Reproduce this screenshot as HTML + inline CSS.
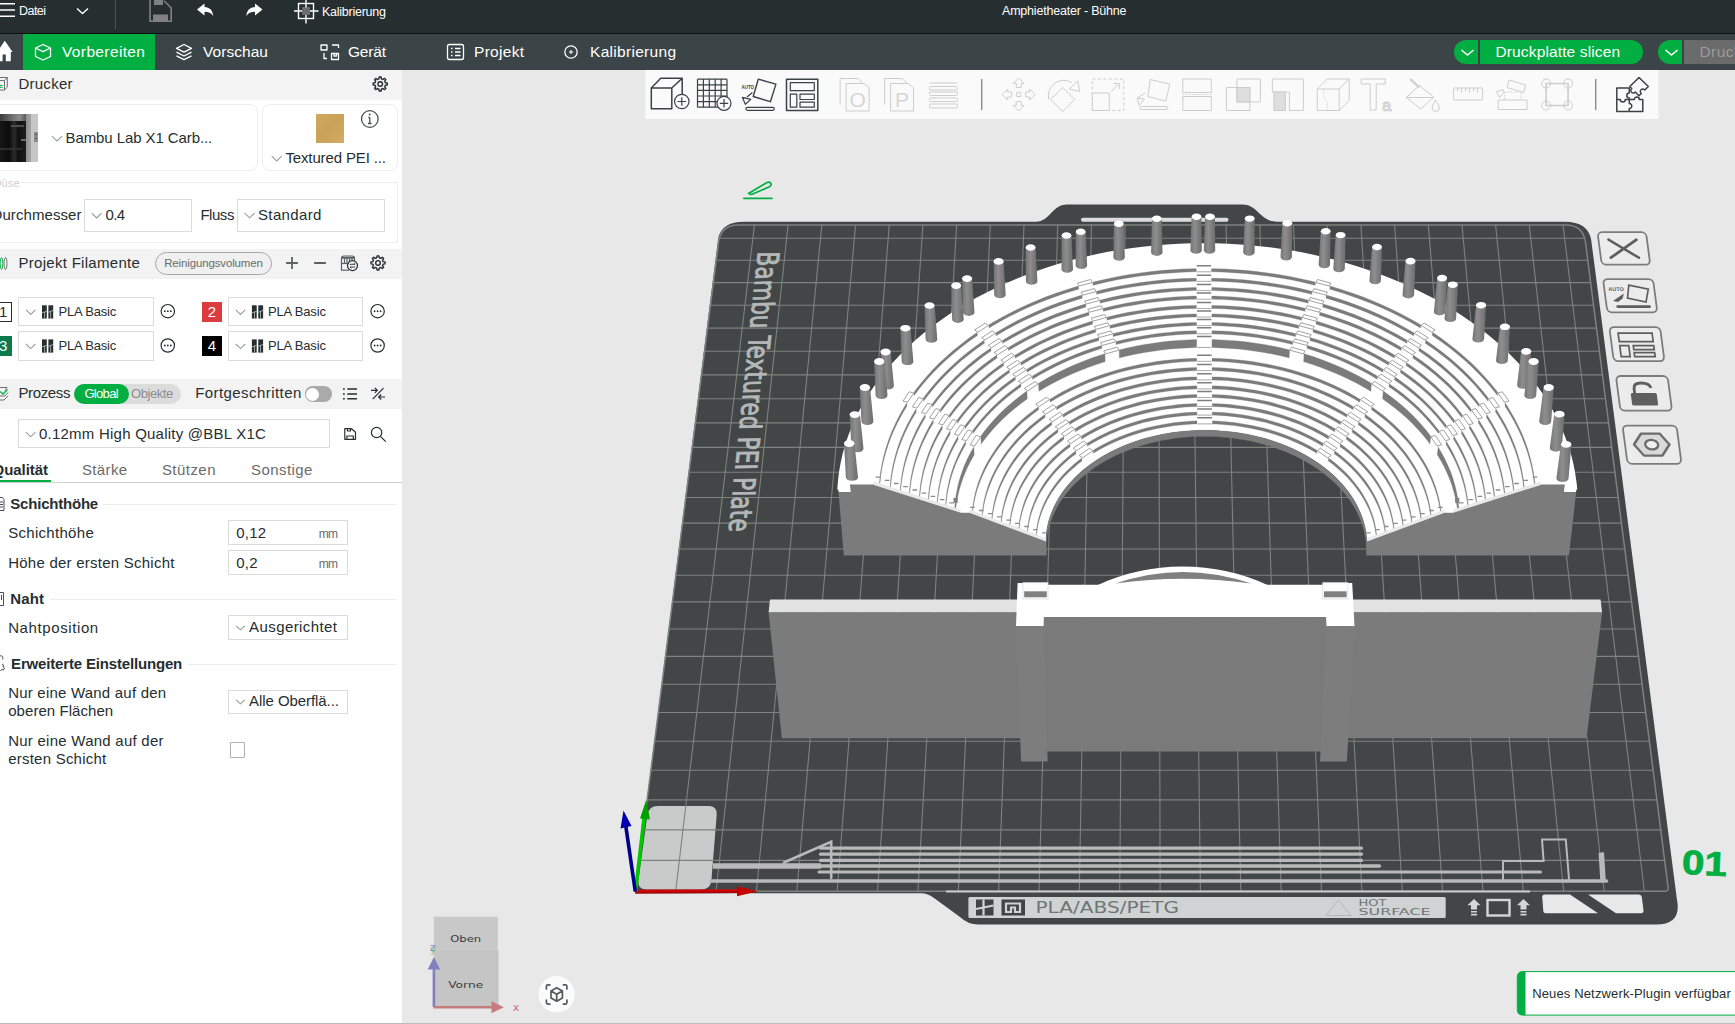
<!DOCTYPE html>
<html lang="de"><head><meta charset="utf-8"><title>Amphietheater - Bühne</title>
<style>
*{box-sizing:border-box;margin:0;padding:0}
html,body{width:1735px;height:1024px;overflow:hidden;background:#e8e8e8;font-family:"Liberation Sans","DejaVu Sans",sans-serif;color:#262e30}
.abs{position:absolute}
#title{position:absolute;left:0;top:0;width:1735px;height:33px;background:#262e30}
#tline{position:absolute;left:0;top:33px;width:1735px;height:1px;background:#0d0f10}
#tabs{position:absolute;left:0;top:34px;width:1735px;height:36px;background:#3b4446;overflow:hidden}
#left{position:absolute;left:0;top:0;width:402px;height:1023px;background:#fff;overflow:hidden}
#bot{position:absolute;left:0;top:1023px;width:1735px;height:1px;background:#bdbdbd}
#vp{position:absolute;left:0;top:0}
.t{position:absolute;white-space:nowrap;line-height:1}
</style></head><body>
<div id="left">
<div class="abs" style="left:0.0px;top:70.0px;width:402.0px;height:30.0px;background:#f3f3f3;"></div>
<div class="abs" style="left:0.0px;top:249.0px;width:402.0px;height:29.6px;background:#f3f3f3;"></div>
<div class="abs" style="left:0.0px;top:379.2px;width:402.0px;height:29.6px;background:#f3f3f3;"></div>
<span class="t" style="left:18.4px;top:76.0px;font-size:15px;color:#262e30;letter-spacing:0.27px;">Drucker</span>
<div class="abs" style="left:-10.0px;top:104.4px;width:267.6px;height:66.6px;border:1px solid #eeeeee;border-radius:8px;"></div>
<div class="abs" style="left:262.3px;top:104.4px;width:135.4px;height:66.6px;border:1px solid #eeeeee;border-radius:8px;"></div>
<div class="abs" style="left:0.0px;top:114.0px;width:38.0px;height:48.0px;background:#c6c6c6;"></div>
<div class="abs" style="left:25.5px;top:114.0px;width:5.5px;height:48.0px;background:linear-gradient(90deg,#8e8e8e,#a6a6a6);"></div>
<div class="abs" style="left:0.0px;top:114.0px;width:25.7px;height:48.0px;background:linear-gradient(90deg,#161616 0,#0b0b0b 35%,#2c2c2c 55%,#101010 70%,#1d1d1d 100%);"></div>
<div class="abs" style="left:0.0px;top:114.0px;width:25.7px;height:6.5px;background:linear-gradient(90deg,#3c3c3c,#6e6e6e 45%,#8c8c8c 75%,#5a5a5a);"></div>
<div class="abs" style="left:11.0px;top:124.5px;width:13.0px;height:2.5px;background:#4e4e4e;"></div>
<div class="abs" style="left:0.0px;top:148.0px;width:22.0px;height:2.0px;background:#2e2e2e;"></div>
<div class="abs" style="left:20.5px;top:138.5px;width:5.5px;height:2.5px;background:#6a6a6a;"></div>
<div class="abs" style="left:34.0px;top:131.5px;width:3.6px;height:10.5px;background:#8d8d8d;"></div>
<div class="abs" style="left:34.6px;top:133.5px;width:2.4px;height:1.5px;background:#555;"></div>
<div class="abs" style="left:34.6px;top:137.5px;width:2.4px;height:1.5px;background:#555;"></div>
<span class="t" style="left:65.5px;top:130.0px;font-size:15px;color:#262e30;letter-spacing:-0.09px;">Bambu Lab X1 Carb...</span>
<div class="abs" style="left:316.2px;top:114.0px;width:27.6px;height:28.7px;background:linear-gradient(135deg,#cfa95f,#c9a258 50%,#d3ad66);"></div>
<span class="t" style="left:285.4px;top:150.0px;font-size:15px;color:#262e30;letter-spacing:-0.13px;">Textured PEI ...</span>
<div class="abs" style="left:-10.0px;top:182.4px;width:407.7px;height:60.7px;border:1px solid #eeeeee;"></div>
<div class="abs" style="left:0.0px;top:176.0px;width:21.0px;height:14.0px;background:#fff;"></div>
<span class="t" style="left:-6.5px;top:178.0px;font-size:11px;color:#cfcfcf;letter-spacing:0.11px;">Düse</span>
<span class="t" style="left:-8.5px;top:207.0px;font-size:15px;color:#262e30;letter-spacing:0.08px;">Durchmesser</span>
<div class="abs" style="left:84.4px;top:199.4px;width:107.2px;height:32.4px;background:#fff;border:1px solid #dbdbdb;"></div>
<span class="t" style="left:105.4px;top:207.0px;font-size:15px;color:#262e30;letter-spacing:-0.53px;">0.4</span>
<span class="t" style="left:200.4px;top:207.0px;font-size:15px;color:#262e30;letter-spacing:-0.46px;">Fluss</span>
<div class="abs" style="left:237.2px;top:199.4px;width:147.5px;height:32.4px;background:#fff;border:1px solid #dbdbdb;"></div>
<span class="t" style="left:258.0px;top:207.0px;font-size:15px;color:#262e30;letter-spacing:0.36px;">Standard</span>
<span class="t" style="left:18.4px;top:255.0px;font-size:15px;color:#262e30;letter-spacing:0.30px;">Projekt Filamente</span>
<div class="abs" style="left:155.2px;top:252.1px;width:116.5px;height:22.5px;background:#f0f0f0;border:1px solid #a8a8a8;border-radius:11.5px;"></div>
<span class="t" style="left:164.2px;top:258.0px;font-size:11.5px;color:#6b6b6b;letter-spacing:-0.14px;">Reinigungsvolumen</span>
<div class="abs" style="left:-8.0px;top:302.4px;width:19.8px;height:19.4px;background:#fff;border:1px solid #262e30;"></div>
<span class="t" style="left:-0.9px;top:304.0px;font-size:15px;color:#262e30;">1</span>
<div class="abs" style="left:18.4px;top:297.2px;width:135.2px;height:29.3px;background:#fff;border:1px solid #dbdbdb;"></div>
<span class="t" style="left:58.4px;top:305.0px;font-size:13px;color:#262e30;letter-spacing:-0.17px;">PLA Basic</span>
<div class="abs" style="left:202.0px;top:302.4px;width:19.9px;height:19.4px;background:#dc3c40;"></div>
<span class="t" style="left:207.8px;top:304.0px;font-size:15px;color:#fff;">2</span>
<div class="abs" style="left:228.0px;top:297.2px;width:135.4px;height:29.3px;background:#fff;border:1px solid #dbdbdb;"></div>
<span class="t" style="left:268.0px;top:305.0px;font-size:13px;color:#262e30;letter-spacing:-0.17px;">PLA Basic</span>
<div class="abs" style="left:-8.0px;top:336.2px;width:19.8px;height:19.4px;background:#0e7a4c;"></div>
<span class="t" style="left:-0.9px;top:338.0px;font-size:15px;color:#fff;">3</span>
<div class="abs" style="left:18.4px;top:331.3px;width:135.2px;height:29.3px;background:#fff;border:1px solid #dbdbdb;"></div>
<span class="t" style="left:58.4px;top:339.0px;font-size:13px;color:#262e30;letter-spacing:-0.17px;">PLA Basic</span>
<div class="abs" style="left:202.0px;top:336.2px;width:19.9px;height:19.4px;background:#000;"></div>
<span class="t" style="left:207.8px;top:338.0px;font-size:15px;color:#fff;">4</span>
<div class="abs" style="left:228.0px;top:331.3px;width:135.4px;height:29.3px;background:#fff;border:1px solid #dbdbdb;"></div>
<span class="t" style="left:268.0px;top:339.0px;font-size:13px;color:#262e30;letter-spacing:-0.17px;">PLA Basic</span>
<span class="t" style="left:18.4px;top:385.0px;font-size:15px;color:#262e30;letter-spacing:-0.36px;">Prozess</span>
<div class="abs" style="left:74.0px;top:383.5px;width:106.8px;height:20.5px;background:#dcdcdc;border-radius:10.3px;"></div>
<div class="abs" style="left:74.0px;top:383.5px;width:54.8px;height:20.5px;background:#00ae42;border-radius:10.3px;"></div>
<span class="t" style="left:84.4px;top:387.0px;font-size:13px;color:#fff;letter-spacing:-0.68px;">Global</span>
<span class="t" style="left:131.1px;top:387.0px;font-size:13px;color:#8c8c8c;letter-spacing:-0.45px;">Objekte</span>
<span class="t" style="left:195.2px;top:385.0px;font-size:15px;color:#262e30;letter-spacing:0.43px;">Fortgeschritten</span>
<div class="abs" style="left:304.8px;top:386.3px;width:27.2px;height:15.4px;background:#aaaaaa;border-radius:7.7px;"></div>
<div class="abs" style="left:306px;top:387.5px;width:13px;height:13px;border-radius:7px;background:#fff"></div>
<div class="abs" style="left:18.4px;top:419.4px;width:311.2px;height:29.1px;background:#fff;border:1px solid #dbdbdb;"></div>
<span class="t" style="left:39.0px;top:426.0px;font-size:15px;color:#262e30;letter-spacing:0.23px;">0.12mm High Quality @BBL X1C</span>
<span class="t" style="left:-7.4px;top:462.0px;font-size:15px;color:#262e30;letter-spacing:-0.06px;font-weight:bold;">Qualität</span>
<div class="abs" style="left:0.0px;top:480.3px;width:50.8px;height:1.7px;background:#00ae42;"></div>
<div class="abs" style="left:0.0px;top:482.0px;width:402.0px;height:1.0px;background:#cfcfcf;"></div>
<span class="t" style="left:82.0px;top:462.0px;font-size:15px;color:#6b6b6b;letter-spacing:0.35px;">Stärke</span>
<span class="t" style="left:161.9px;top:462.0px;font-size:15px;color:#6b6b6b;letter-spacing:0.46px;">Stützen</span>
<span class="t" style="left:251.0px;top:462.0px;font-size:15px;color:#6b6b6b;letter-spacing:0.43px;">Sonstige</span>
<span class="t" style="left:10.3px;top:496.0px;font-size:15px;color:#262e30;letter-spacing:-0.21px;font-weight:bold;">Schichthöhe</span>
<div class="abs" style="left:102.6px;top:503.6px;width:293.1px;height:1.0px;background:#ececec;"></div>
<span class="t" style="left:10.3px;top:591.0px;font-size:15px;color:#262e30;letter-spacing:0.12px;font-weight:bold;">Naht</span>
<div class="abs" style="left:49.8px;top:598.8px;width:345.9px;height:1.0px;background:#ececec;"></div>
<span class="t" style="left:11.1px;top:656.0px;font-size:15px;color:#262e30;letter-spacing:-0.17px;font-weight:bold;">Erweiterte Einstellungen</span>
<div class="abs" style="left:187.6px;top:664.0px;width:208.1px;height:1.0px;background:#ececec;"></div>
<span class="t" style="left:8.2px;top:525.0px;font-size:15px;color:#262e30;letter-spacing:0.30px;">Schichthöhe</span>
<div class="abs" style="left:228.0px;top:520.4px;width:119.9px;height:24.4px;background:#fff;border:1px solid #dbdbdb;"></div>
<span class="t" style="left:236.2px;top:525.0px;font-size:15px;color:#262e30;letter-spacing:0.24px;">0,12</span>
<span class="t" style="left:318.7px;top:528.0px;font-size:12px;color:#6b6b6b;letter-spacing:-0.79px;">mm</span>
<span class="t" style="left:8.2px;top:555.0px;font-size:15px;color:#262e30;letter-spacing:0.24px;">Höhe der ersten Schicht</span>
<div class="abs" style="left:228.0px;top:550.3px;width:119.9px;height:24.4px;background:#fff;border:1px solid #dbdbdb;"></div>
<span class="t" style="left:236.2px;top:555.0px;font-size:15px;color:#262e30;letter-spacing:0.22px;">0,2</span>
<span class="t" style="left:318.7px;top:558.0px;font-size:12px;color:#6b6b6b;letter-spacing:-0.79px;">mm</span>
<span class="t" style="left:8.2px;top:620.0px;font-size:15px;color:#262e30;letter-spacing:0.60px;">Nahtposition</span>
<div class="abs" style="left:228.0px;top:615.4px;width:119.9px;height:24.3px;background:#fff;border:1px solid #dbdbdb;"></div>
<span class="t" style="left:249.1px;top:619.0px;font-size:15px;color:#262e30;letter-spacing:0.41px;">Ausgerichtet</span>
<span class="t" style="left:8.2px;top:685.0px;font-size:15px;color:#262e30;letter-spacing:0.21px;">Nur eine Wand auf den</span>
<span class="t" style="left:8.2px;top:703.0px;font-size:15px;color:#262e30;letter-spacing:0.06px;">oberen Flächen</span>
<div class="abs" style="left:228.0px;top:689.6px;width:119.9px;height:24.0px;background:#fff;border:1px solid #dbdbdb;"></div>
<span class="t" style="left:249.1px;top:693.0px;font-size:15px;color:#262e30;letter-spacing:-0.07px;">Alle Oberflä...</span>
<span class="t" style="left:8.2px;top:733.0px;font-size:15px;color:#262e30;letter-spacing:0.25px;">Nur eine Wand auf der</span>
<span class="t" style="left:8.2px;top:751.0px;font-size:15px;color:#262e30;letter-spacing:0.23px;">ersten Schicht</span>
<div class="abs" style="left:229.5px;top:742.3px;width:15.2px;height:15.3px;background:#fff;border:1px solid #b0b0b0;border-radius:1px;"></div>
<svg class="abs" style="left:0;top:0" width="402" height="1024" viewBox="0 0 402 1024"><path d="M378.96 78.85L379.25 76.96L381.15 76.96L381.44 78.85L382.97 79.48L384.51 78.36L385.84 79.69L384.72 81.23L385.35 82.76L387.24 83.05L387.24 84.95L385.35 85.24L384.72 86.77L385.84 88.31L384.51 89.64L382.97 88.52L381.44 89.15L381.15 91.04L379.25 91.04L378.96 89.15L377.43 88.52L375.89 89.64L374.56 88.31L375.68 86.77L375.05 85.24L373.16 84.95L373.16 83.05L375.05 82.76L375.68 81.23L374.56 79.69L375.89 78.36L377.43 79.48Z" fill="none" stroke="#262e30" stroke-width="1.4" stroke-linejoin="round"/><circle cx="380.2" cy="84" r="2.3" fill="none" stroke="#262e30" stroke-width="1.4"/><path d="M376.76 257.75L377.05 255.86L378.95 255.86L379.24 257.75L380.77 258.38L382.31 257.26L383.64 258.59L382.52 260.13L383.15 261.66L385.04 261.95L385.04 263.85L383.15 264.14L382.52 265.67L383.64 267.21L382.31 268.54L380.77 267.42L379.24 268.05L378.95 269.94L377.05 269.94L376.76 268.05L375.23 267.42L373.69 268.54L372.36 267.21L373.48 265.67L372.85 264.14L370.96 263.85L370.96 261.95L372.85 261.66L373.48 260.13L372.36 258.59L373.69 257.26L375.23 258.38Z" fill="none" stroke="#262e30" stroke-width="1.4" stroke-linejoin="round"/><circle cx="378" cy="262.9" r="2.3" fill="none" stroke="#262e30" stroke-width="1.4"/><circle cx="369.800" cy="119" r="8.300" fill="none" stroke="#4a5053" stroke-width="1.300"/><path d="M369.800 117.500V123.500M368.300 117.500H369.800M368 123.500H371.600" stroke="#4a5053" stroke-width="1.300" fill="none"/><circle cx="369.700" cy="114.600" r="1" fill="#4a5053"/><path d="M52.0 136.1L57.0 140.9L62.0 136.1" fill="none" stroke="#969b9d" stroke-width="1.05"/><path d="M271.7 156.1L276.7 160.9L281.7 156.1" fill="none" stroke="#969b9d" stroke-width="1.05"/><path d="M91.7 213.1L96.7 217.9L101.6 213.1" fill="none" stroke="#969b9d" stroke-width="1.05"/><path d="M244.6 213.1L249.6 217.9L254.7 213.1" fill="none" stroke="#969b9d" stroke-width="1.05"/><path d="M26.0 309.9L30.7 314.5L35.4 309.9" fill="none" stroke="#969b9d" stroke-width="1.05"/><path d="M235.8 309.9L240.5 314.5L245.2 309.9" fill="none" stroke="#969b9d" stroke-width="1.05"/><path d="M26.0 344.0L30.7 348.6L35.4 344.0" fill="none" stroke="#969b9d" stroke-width="1.05"/><path d="M235.8 344.0L240.5 348.6L245.2 344.0" fill="none" stroke="#969b9d" stroke-width="1.05"/><path d="M26.0 432.2L30.7 436.8L35.4 432.2" fill="none" stroke="#969b9d" stroke-width="1.05"/><path d="M236.2 625.8L240.4 629.8L244.7 625.8" fill="none" stroke="#969b9d" stroke-width="1.05"/><path d="M236.2 699.8L240.4 703.8L244.7 699.8" fill="none" stroke="#969b9d" stroke-width="1.05"/><circle cx="167.8" cy="311.2" r="6.700" fill="none" stroke="#262e30" stroke-width="1.200"/><circle cx="164.8" cy="311.2" r=".9" fill="#262e30"/><circle cx="167.8" cy="311.2" r=".9" fill="#262e30"/><circle cx="170.8" cy="311.2" r=".9" fill="#262e30"/><circle cx="377.6" cy="311.2" r="6.700" fill="none" stroke="#262e30" stroke-width="1.200"/><circle cx="374.6" cy="311.2" r=".9" fill="#262e30"/><circle cx="377.6" cy="311.2" r=".9" fill="#262e30"/><circle cx="380.6" cy="311.2" r=".9" fill="#262e30"/><circle cx="167.8" cy="345.5" r="6.700" fill="none" stroke="#262e30" stroke-width="1.200"/><circle cx="164.8" cy="345.5" r=".9" fill="#262e30"/><circle cx="167.8" cy="345.5" r=".9" fill="#262e30"/><circle cx="170.8" cy="345.5" r=".9" fill="#262e30"/><circle cx="377.6" cy="345.5" r="6.700" fill="none" stroke="#262e30" stroke-width="1.200"/><circle cx="374.6" cy="345.5" r=".9" fill="#262e30"/><circle cx="377.6" cy="345.5" r=".9" fill="#262e30"/><circle cx="380.6" cy="345.5" r=".9" fill="#262e30"/><rect x="42" y="305.3" width="4.800" height="13.200" fill="#262e30"/><rect x="48.4" y="305.3" width="4.800" height="13.200" fill="#262e30"/><path d="M42 312.8L46.8 311.3M48.4 312.3L53.2 310.3M44.6 311.8V318.3M50.6 311.3V318.3" stroke="#cfd2d3" stroke-width=".7" fill="none"/><rect x="251.9" y="305.3" width="4.800" height="13.200" fill="#262e30"/><rect x="258.3" y="305.3" width="4.800" height="13.200" fill="#262e30"/><path d="M251.9 312.8L256.7 311.3M258.3 312.3L263.1 310.3M254.5 311.8V318.3M260.5 311.3V318.3" stroke="#cfd2d3" stroke-width=".7" fill="none"/><rect x="42" y="339.4" width="4.800" height="13.200" fill="#262e30"/><rect x="48.4" y="339.4" width="4.800" height="13.200" fill="#262e30"/><path d="M42 346.9L46.8 345.4M48.4 346.4L53.2 344.4M44.6 345.9V352.4M50.6 345.4V352.4" stroke="#cfd2d3" stroke-width=".7" fill="none"/><rect x="251.9" y="339.4" width="4.800" height="13.200" fill="#262e30"/><rect x="258.3" y="339.4" width="4.800" height="13.200" fill="#262e30"/><path d="M251.9 346.9L256.7 345.4M258.3 346.4L263.1 344.4M254.5 345.9V352.4M260.5 345.4V352.4" stroke="#cfd2d3" stroke-width=".7" fill="none"/><path d="M286.100 263H297.900M292 257.100V268.900M314.100 263H325.900" stroke="#5b6366" stroke-width="1.800" fill="none"/><g fill="none" stroke="#5b6366" stroke-width="1.200"><path d="M341.500 270V258.500a2.500 2.500 0 0 1 2.500-2.500h8a2.500 2.500 0 0 1 2.500 2.500V262"/><path d="M341.500 263.500H349"/><path d="M344.500 258.500V263M347 258.500V263M349.500 258.500V262M352 258.500V261"/><path d="M341.500 257.800H354.500" stroke-width="2"/><path d="M341 270.200H349"/></g><circle cx="352.500" cy="265.600" r="5" fill="#f3f3f3" stroke="#262e30" stroke-width="1.200"/><path d="M349.700 264.300H355M353.700 263l1.400 1.300M355.300 267H350M351.400 268.300L350 267" stroke="#262e30" stroke-width=".9" fill="none"/><path d="M347.300 388.900H357M347.300 393.900H357M347.300 398.800H357" stroke="#262e30" stroke-width="1.500" fill="none"/><path d="M343 388.900h1.800M343 393.900h1.800M343 398.800h1.800" stroke="#262e30" stroke-width="1.500"/><path d="M372.700 399.200L383.500 388.200M371 390.300H377M374.800 387.800L377.300 390.300L374.800 392.800M385 397H379M381.200 394.500L378.700 397L381.200 399.500" stroke="#262e30" stroke-width="1.200" fill="none"/><path d="M344.800 428.700H351.500L355.500 432.300V439.300H344.800ZM347 439.300V436H353.300V439.300M347.500 428.700V431H350.500V428.700" stroke="#262e30" stroke-width="1.200" fill="none" stroke-linejoin="round"/><circle cx="376.600" cy="432.500" r="5.200" fill="none" stroke="#262e30" stroke-width="1.200"/><path d="M380.400 436.300L385.700 441.700" stroke="#262e30" stroke-width="1.200"/><g fill="none" stroke="#6b7173" stroke-width="1"><path d="M-3 80.500H4.500V90H-3M4.500 80.500L7.300 77.500V87.300L4.500 90M-3 77.500H7.300"/></g><path d="M-1 85.500H2.500M-1 87.300H2.500" stroke="#00ae42" stroke-width="1"/><ellipse cx="1.500" cy="263.500" rx="1.300" ry="5.800" fill="none" stroke="#00ae42" stroke-width="1"/><ellipse cx="5.500" cy="263.500" rx="1.500" ry="6" fill="none" stroke="#6b7173" stroke-width="1"/><g fill="none" stroke-width="1"><path d="M-2 387.500H7L5 390.500M-2 396L5 396L8 392.500M-2 400L4 400L8 396" stroke="#6b7173"/><path d="M0 391.500L3 394L7.500 389.500" stroke="#00ae42" stroke-width="1.300"/></g><g fill="none" stroke="#4a5053" stroke-width="1"><path d="M-1 497.500H2.500L4 499.500V510.500H-1M-1 502H3M-1 504.500H3M-1 507H3"/><path d="M-1 592.500H3.500V605.500H-1M1.500 595V600"/><path d="M-1 657.500a2 2 0 1 1 3 2M2 664l1.500 1-.5 2 1.500 1-1 2-2-.5-1 1.500" /></g></svg>
</div>
<svg id="vp" width="1735" height="1024" viewBox="0 0 1735 1024">
<path d="M744.4 221.7L1036 221.7 C1050 221.7 1052 204.5 1067 204.5 L1242.5 204.5 C1258 204.5 1260 221.7 1277 221.7L1564.9 221.7Q1587.9 221.7 1591.2 239.9L1677.0 899.9Q1681.7 924.5 1656.2 924.5L978 924.5 Q968 924.5 960 917 L934 898 Q928 893.3 921 893.3L635.1 893.3L718.2 238.5 Q721.4 221.7 744.4 221.7Z" fill="#424647"/>
<rect x="1081" y="217.800" width="147.500" height="4" rx="2" fill="#dcdcdc"/>
<path d="M638.4 880.5Q637.2 889.4 646.2 889.4L701.6 889.4Q710.6 889.4 711.4 880.5L716.7 814.8Q717.4 805.9 708.4 805.9L657.7 805.9Q648.7 805.9 647.4 814.8Z" fill="#c9cbcb"/>
<path d="M675.7 891.3L754.4 225.1M716.1 891.3L788.1 225.1M756.4 891.3L821.8 225.1M796.8 891.3L855.5 225.1M837.2 891.3L889.2 225.1M877.5 891.3L922.9 225.1M917.9 891.3L956.6 225.1M958.3 891.3L990.3 225.1M998.6 891.3L1024.0 225.1M1039.0 891.3L1057.7 225.1M1079.3 891.3L1091.4 225.1M1119.7 891.3L1125.0 225.1M1160.1 891.3L1158.7 225.1M1200.4 891.3L1192.4 225.1M1240.8 891.3L1226.1 225.1M1281.2 891.3L1259.8 225.1M1321.5 891.3L1293.5 225.1M1361.9 891.3L1327.2 225.1M1402.3 891.3L1360.9 225.1M1442.6 891.3L1394.6 225.1M1483.0 891.3L1428.3 225.1M1523.3 891.3L1462.0 225.1M1563.7 891.3L1495.6 225.1M1604.1 891.3L1529.3 225.1M1644.4 891.3L1563.0 225.1M639.3 860.4L1664.7 860.4M643.2 829.9L1660.8 829.9M647.1 799.9L1656.9 799.9M650.9 770.3L1653.1 770.3M654.6 741.2L1649.4 741.2M658.3 712.5L1645.7 712.5M661.9 684.3L1642.1 684.3M665.5 656.4L1638.5 656.4M669.0 629.0L1635.0 629.0M672.4 601.9L1631.6 601.9M675.9 575.3L1628.1 575.3M679.2 549.0L1624.8 549.0M682.6 523.1L1621.4 523.1M685.8 497.5L1618.2 497.5M689.1 472.3L1614.9 472.3M692.3 447.4L1611.7 447.4M695.4 422.9L1608.6 422.9M698.5 398.7L1605.5 398.7M701.6 374.9L1602.4 374.9M704.6 351.3L1599.4 351.3M707.6 328.1L1596.4 328.1M710.5 305.2L1593.5 305.2M713.4 282.6L1590.6 282.6M716.3 260.3L1587.7 260.3M719.1 238.2L1584.9 238.2" fill="none" stroke="#7d837f" stroke-width="1.100"/>
<path d="M635.9 887.3Q635.3 891.3 639.3 891.3L1664.7 891.3Q1668.7 891.3 1668.1 887.3L1585.5 242.5Q1583.2 225.1 1565.7 225.1L738.3 225.1Q720.8 225.1 718.5 242.5Z" fill="none" stroke="#7d837f" stroke-width="1.500"/>
<text transform="matrix(-0.1041 0.9946 -1 0.02 758.0 251.5)" x="0" y="0" font-family="DejaVu Sans, Liberation Sans, sans-serif" font-size="30" textLength="282" lengthAdjust="spacingAndGlyphs" fill="#b4b8b8" stroke="#b4b8b8" stroke-width=".9">Bambu Textured PEI Plate</text><g fill="none" stroke="#b9b9b9" stroke-linecap="round"><path d="M820.500 848.100H1361.500M820.500 854.200H1361.500M820.500 860.400H1361.500M820.500 866H1379.500" stroke-width="3.300"/><path d="M819 872H1540.500" stroke-width="3"/><path d="M711 881H1606.500" stroke-width="3.600"/><path d="M713 866H821" stroke-width="5.500" stroke-linecap="butt"/><path d="M784 862.500L831.200 841.800V878" stroke-width="2.600"/><path d="M1503 879V861H1543.600L1542 839.600H1565.800L1569 879" stroke-width="2"/><path d="M1601.300 852.500L1603 880" stroke-width="5.500" stroke-linecap="butt"/></g><path d="M946 891.500H1530" stroke="#c9cccc" stroke-width="1.800"/><rect x="968.400" y="897" width="477.300" height="21" rx="1.500" fill="#cfd3d4"/><g fill="#3f4547"><rect x="976" y="899.500" width="17.500" height="16"/><rect x="1001.500" y="899.500" width="23.500" height="16"/></g><path d="M983.500 899.500V915.500M976 909L993.500 905.500M1006 903.500h14v8.500h-5v-4.500h-4v4.500h-5z" stroke="#cfd3d4" stroke-width="2.200" fill="none"/><text x="1035.500" y="913" font-family="DejaVu Sans, Liberation Sans, sans-serif" font-size="15" textLength="143.500" lengthAdjust="spacingAndGlyphs" fill="#6f7575">PLA/ABS/PETG</text><path d="M1338.500 900L1351 915.500H1326Z" fill="none" stroke="#b3b8b9" stroke-width="1"/><text x="1358.500" y="906" font-family="DejaVu Sans, Liberation Sans, sans-serif" font-size="8.500" textLength="28" lengthAdjust="spacingAndGlyphs" fill="#6f7575">HOT</text><text x="1358.500" y="915.300" font-family="DejaVu Sans, Liberation Sans, sans-serif" font-size="8.500" textLength="72" lengthAdjust="spacingAndGlyphs" fill="#6f7575">SURFACE</text><path d="M1474 899l6.500 6.300h-3.500v4.200h-6v-4.200h-3.500zM1471 911h6v1.600h-6zM1471 913.800h6v1.600h-6z" fill="#d3d7d8"/><path d="M1523.5 899l6.500 6.300h-3.500v4.200h-6v-4.200h-3.500zM1520.5 911h6v1.600h-6zM1520.5 913.800h6v1.600h-6z" fill="#d3d7d8"/><rect x="1487.500" y="900" width="22" height="15.500" fill="none" stroke="#d3d7d8" stroke-width="2.400"/><path d="M1545 894.500H1570L1598 913.300H1546.500Q1543.500 913.300 1543.300 911L1542.200 897Q1542 894.500 1545 894.500ZM1588 894.500H1638.500Q1641.500 894.500 1641.800 897L1643.500 910.500Q1643.800 913.300 1641 913.300H1616Z" fill="#e8e8e8"/><text transform="matrix(1 0.05 -0.04 1 1681.500 873.800)" font-family="Liberation Sans, sans-serif" font-weight="bold" font-size="34" textLength="45" lengthAdjust="spacingAndGlyphs" fill="#00ae42" stroke="#00ae42" stroke-width=".7">01</text>
<path d="M1577.3 489.6L1576.3 480.5L1574.9 471.4L1573.1 462.4L1570.8 453.5L1568.0 444.6L1564.8 435.9L1561.2 427.2L1557.2 418.6L1552.8 410.2L1547.9 401.9L1542.7 393.7L1537.0 385.7L1531.0 377.8L1524.6 370.1L1517.9 362.6L1510.8 355.2L1503.4 348.1L1495.6 341.1L1487.5 334.3L1479.1 327.7L1470.5 321.4L1461.5 315.2L1452.2 309.3L1442.7 303.6L1433.0 298.1L1423.0 292.9L1412.8 287.9L1402.3 283.2L1391.7 278.7L1380.8 274.4L1369.8 270.4L1358.6 266.7L1347.3 263.3L1335.8 260.1L1324.2 257.2L1312.5 254.5L1300.6 252.1L1288.7 250.0L1276.7 248.2L1264.6 246.7L1252.4 245.4L1240.3 244.4L1228.0 243.7L1215.8 243.3L1203.5 243.2L1191.3 243.3L1179.1 243.7L1166.9 244.4L1154.7 245.4L1142.6 246.7L1130.5 248.2L1118.6 250.0L1106.7 252.1L1094.9 254.5L1083.3 257.2L1071.8 260.1L1060.4 263.3L1049.1 266.7L1038.1 270.4L1027.2 274.4L1016.5 278.7L1006.0 283.2L995.7 287.9L985.6 292.9L975.8 298.1L966.2 303.6L956.8 309.3L947.8 315.2L939.0 321.4L930.5 327.7L922.3 334.3L914.5 341.1L906.9 348.1L899.7 355.2L892.8 362.6L886.3 370.1L880.2 377.8L874.4 385.7L869.0 393.7L864.0 401.9L859.4 410.2L855.2 418.6L851.5 427.2L848.1 435.9L845.2 444.6L842.7 453.5L840.7 462.4L839.1 471.4L838.0 480.5L837.3 489.6L1046.0 547.0L1045.9 542.9L1045.9 538.8L1046.2 534.7L1046.7 530.6L1047.4 526.6L1048.3 522.5L1049.4 518.5L1050.8 514.6L1052.3 510.7L1054.0 506.8L1055.9 503.0L1058.0 499.2L1060.3 495.5L1062.8 491.8L1065.4 488.3L1068.3 484.8L1071.3 481.4L1074.4 478.0L1077.8 474.8L1081.3 471.6L1084.9 468.5L1088.8 465.6L1092.7 462.7L1096.8 459.9L1101.0 457.3L1105.4 454.7L1109.9 452.3L1114.5 450.0L1119.2 447.8L1124.0 445.7L1128.9 443.7L1133.9 441.9L1139.0 440.2L1144.2 438.6L1149.5 437.2L1154.8 435.9L1160.2 434.7L1165.6 433.7L1171.1 432.8L1176.6 432.0L1182.2 431.4L1187.8 430.9L1193.4 430.5L1199.1 430.3L1204.7 430.2L1210.4 430.3L1216.0 430.5L1221.6 430.9L1227.3 431.4L1232.8 432.0L1238.4 432.8L1243.9 433.7L1249.4 434.7L1254.8 435.9L1260.2 437.2L1265.5 438.6L1270.7 440.2L1275.9 441.9L1280.9 443.7L1285.9 445.7L1290.8 447.8L1295.6 450.0L1300.2 452.3L1304.8 454.7L1309.2 457.3L1313.5 459.9L1317.7 462.7L1321.7 465.6L1325.6 468.5L1329.4 471.6L1333.0 474.8L1336.4 478.0L1339.7 481.4L1342.8 484.8L1345.7 488.3L1348.5 491.8L1351.1 495.5L1353.5 499.2L1355.7 503.0L1357.7 506.8L1359.5 510.7L1361.2 514.6L1362.6 518.5L1363.8 522.5L1364.9 526.6L1365.7 530.6L1366.3 534.7L1366.7 538.8L1366.9 542.9L1366.9 547.0Z" fill="#ffffff"/>
<path d="M1535.5 489.6L1534.8 481.5L1533.6 473.4L1532.1 465.4L1530.2 457.5L1527.9 449.6L1525.2 441.7L1522.1 434.0L1518.6 426.4L1514.7 418.8L1510.5 411.4L1506.0 404.1L1501.0 396.9L1495.8 389.8L1490.2 382.9L1484.2 376.2L1478.0 369.6L1471.4 363.1L1464.6 356.9L1457.4 350.8L1450.0 344.9L1442.3 339.1L1434.4 333.6L1426.2 328.3L1417.7 323.1L1409.0 318.2L1400.1 313.5L1391.0 309.0L1381.7 304.7L1372.2 300.7L1362.6 296.8L1352.7 293.3L1342.7 289.9L1332.6 286.8L1322.3 283.9L1312.0 281.3L1301.5 278.9L1290.9 276.7L1280.2 274.8L1269.4 273.2L1258.6 271.8L1247.7 270.6L1236.8 269.7L1225.9 269.1L1214.9 268.7L1203.9 268.6L1193.0 268.7L1182.0 269.1L1171.1 269.7L1160.2 270.6L1149.3 271.8L1138.6 273.2L1127.8 274.8L1117.2 276.7L1106.7 278.9L1096.3 281.3L1086.0 283.9L1075.8 286.8L1065.8 289.9L1055.9 293.3L1046.1 296.8L1036.6 300.7L1027.2 304.7L1018.1 309.0L1009.1 313.5L1000.3 318.2L991.8 323.1L983.5 328.3L975.5 333.6L967.7 339.1L960.2 344.9L952.9 350.8L946.0 356.9L939.3 363.1L932.9 369.6L926.9 376.2L921.2 382.9L915.8 389.8L910.7 396.9L906.0 404.1L901.7 411.4L897.7 418.8L894.1 426.4L890.8 434.0L888.0 441.7L885.5 449.6L883.4 457.5L881.7 465.4L880.4 473.4L879.6 481.5L879.1 489.6L879.3 492.8L879.8 484.7L880.7 476.6L881.9 468.6L883.6 460.6L885.7 452.7L888.2 444.9L891.0 437.1L894.3 429.5L897.9 421.9L901.9 414.5L906.2 407.2L910.9 400.0L916.0 393.0L921.4 386.1L927.1 379.3L933.1 372.7L939.5 366.3L946.1 360.0L953.1 353.9L960.3 348.0L967.8 342.3L975.6 336.7L983.6 331.4L991.9 326.2L1000.5 321.3L1009.2 316.6L1018.2 312.1L1027.3 307.8L1036.7 303.8L1046.2 300.0L1055.9 296.4L1065.8 293.0L1075.9 289.9L1086.0 287.0L1096.3 284.4L1106.7 282.0L1117.3 279.8L1127.9 277.9L1138.6 276.3L1149.3 274.9L1160.2 273.7L1171.1 272.9L1182.0 272.2L1192.9 271.8L1203.9 271.7L1214.8 271.8L1225.8 272.2L1236.7 272.9L1247.7 273.7L1258.5 274.9L1269.3 276.3L1280.1 277.9L1290.8 279.8L1301.3 282.0L1311.8 284.4L1322.2 287.0L1332.5 289.9L1342.6 293.0L1352.6 296.4L1362.4 300.0L1372.1 303.8L1381.5 307.8L1390.8 312.1L1399.9 316.6L1408.8 321.3L1417.5 326.2L1425.9 331.4L1434.1 336.7L1442.1 342.3L1449.8 348.0L1457.2 353.9L1464.3 360.0L1471.2 366.3L1477.7 372.7L1484.0 379.3L1489.9 386.1L1495.5 393.0L1500.7 400.0L1505.7 407.2L1510.2 414.5L1514.5 421.9L1518.3 429.5L1521.8 437.1L1524.9 444.9L1527.6 452.7L1529.9 460.6L1531.8 468.6L1533.3 476.6L1534.4 484.7L1535.1 492.8Z" fill="#7b7b7b" stroke="#7b7b7b" stroke-width=".3"/>
<path d="M1524.7 492.8L1524.1 484.9L1523.0 477.1L1521.6 469.3L1519.8 461.6L1517.6 453.9L1515.0 446.3L1512.0 438.8L1508.7 431.4L1505.0 424.1L1500.9 416.9L1496.5 409.8L1491.7 402.8L1486.7 396.0L1481.3 389.3L1475.5 382.7L1469.5 376.3L1463.2 370.0L1456.6 363.9L1449.7 358.0L1442.5 352.3L1435.0 346.7L1427.3 341.3L1419.4 336.1L1411.2 331.2L1402.8 326.4L1394.2 321.8L1385.4 317.4L1376.4 313.3L1367.2 309.3L1357.8 305.6L1348.3 302.1L1338.6 298.8L1328.8 295.8L1318.8 293.0L1308.8 290.4L1298.6 288.1L1288.3 286.0L1277.9 284.2L1267.5 282.6L1257.0 281.2L1246.5 280.1L1235.9 279.2L1225.3 278.6L1214.6 278.2L1204.0 278.1L1193.3 278.2L1182.7 278.6L1172.1 279.2L1161.6 280.1L1151.0 281.2L1140.6 282.6L1130.2 284.2L1119.9 286.0L1109.7 288.1L1099.6 290.4L1089.6 293.0L1079.7 295.8L1070.0 298.8L1060.4 302.1L1051.0 305.6L1041.7 309.3L1032.7 313.3L1023.8 317.4L1015.1 321.8L1006.6 326.4L998.4 331.2L990.3 336.1L982.6 341.3L975.0 346.7L967.7 352.3L960.7 358.0L954.0 363.9L947.6 370.0L941.4 376.3L935.6 382.7L930.1 389.3L924.9 396.0L920.0 402.8L915.5 409.8L911.3 416.9L907.5 424.1L904.0 431.4L900.9 438.8L898.1 446.3L895.8 453.9L893.8 461.6L892.2 469.3L891.0 477.1L890.2 484.9L889.8 492.8L890.0 495.9L890.4 488.0L891.2 480.2L892.4 472.4L894.0 464.7L896.0 457.1L898.3 449.5L901.1 442.0L904.2 434.5L907.7 427.2L911.5 420.0L915.7 412.9L920.2 405.9L925.1 399.1L930.3 392.4L935.8 385.8L941.6 379.4L947.7 373.2L954.2 367.1L960.9 361.1L967.9 355.4L975.2 349.8L982.7 344.5L990.5 339.3L998.5 334.3L1006.7 329.5L1015.2 324.9L1023.9 320.5L1032.8 316.4L1041.8 312.4L1051.1 308.7L1060.5 305.2L1070.1 302.0L1079.8 298.9L1089.6 296.1L1099.6 293.6L1109.7 291.2L1119.9 289.1L1130.2 287.3L1140.6 285.7L1151.0 284.3L1161.5 283.2L1172.1 282.3L1182.7 281.7L1193.3 281.3L1203.9 281.2L1214.6 281.3L1225.2 281.7L1235.8 282.3L1246.4 283.2L1256.9 284.3L1267.4 285.7L1277.8 287.3L1288.2 289.1L1298.5 291.2L1308.6 293.6L1318.7 296.1L1328.6 298.9L1338.4 302.0L1348.1 305.2L1357.6 308.7L1367.0 312.4L1376.2 316.4L1385.2 320.5L1394.0 324.9L1402.6 329.5L1411.0 334.3L1419.2 339.3L1427.1 344.5L1434.8 349.8L1442.2 355.4L1449.4 361.1L1456.3 367.1L1462.9 373.2L1469.3 379.4L1475.3 385.8L1481.0 392.4L1486.4 399.1L1491.5 405.9L1496.2 412.9L1500.6 420.0L1504.7 427.2L1508.4 434.5L1511.7 442.0L1514.7 449.5L1517.3 457.1L1519.5 464.7L1521.3 472.4L1522.7 480.2L1523.8 488.0L1524.4 495.9Z" fill="#7b7b7b" stroke="#7b7b7b" stroke-width=".3"/>
<path d="M1514.4 495.9L1513.8 488.3L1512.9 480.7L1511.5 473.2L1509.7 465.7L1507.6 458.2L1505.2 450.9L1502.3 443.6L1499.1 436.4L1495.5 429.3L1491.6 422.3L1487.4 415.4L1482.8 408.6L1477.9 402.0L1472.7 395.5L1467.2 389.1L1461.4 382.9L1455.2 376.8L1448.8 370.9L1442.2 365.1L1435.2 359.5L1428.0 354.1L1420.6 348.9L1412.9 343.9L1405.0 339.0L1396.8 334.3L1388.5 329.9L1379.9 325.6L1371.2 321.6L1362.3 317.8L1353.2 314.1L1344.0 310.7L1334.6 307.6L1325.1 304.6L1315.4 301.9L1305.7 299.4L1295.8 297.1L1285.8 295.1L1275.8 293.3L1265.7 291.7L1255.5 290.4L1245.3 289.3L1235.0 288.5L1224.7 287.9L1214.4 287.5L1204.0 287.4L1193.7 287.5L1183.4 287.9L1173.1 288.5L1162.9 289.3L1152.7 290.4L1142.5 291.7L1132.5 293.3L1122.5 295.1L1112.6 297.1L1102.8 299.4L1093.1 301.9L1083.5 304.6L1074.1 307.6L1064.8 310.7L1055.7 314.1L1046.7 317.8L1037.9 321.6L1029.3 325.6L1020.9 329.9L1012.7 334.3L1004.7 339.0L996.9 343.9L989.4 348.9L982.1 354.1L975.0 359.5L968.3 365.1L961.8 370.9L955.5 376.8L949.6 382.9L944.0 389.1L938.6 395.5L933.6 402.0L928.9 408.6L924.6 415.4L920.5 422.3L916.8 429.3L913.5 436.4L910.5 443.6L907.9 450.9L905.6 458.2L903.7 465.7L902.2 473.2L901.1 480.7L900.3 488.3L900.0 495.9L900.2 499.0L900.5 491.4L901.3 483.8L902.4 476.3L903.9 468.8L905.8 461.4L908.1 454.0L910.7 446.7L913.7 439.5L917.0 432.4L920.7 425.4L924.7 418.5L929.1 411.8L933.8 405.1L938.8 398.6L944.1 392.2L949.8 386.0L955.7 379.9L961.9 374.0L968.4 368.2L975.2 362.7L982.2 357.2L989.5 352.0L997.0 347.0L1004.8 342.1L1012.8 337.5L1021.0 333.0L1029.4 328.8L1038.0 324.7L1046.8 320.9L1055.7 317.3L1064.9 313.9L1074.1 310.7L1083.6 307.7L1093.1 305.0L1102.8 302.5L1112.6 300.2L1122.5 298.2L1132.5 296.4L1142.5 294.8L1152.7 293.5L1162.9 292.4L1173.1 291.6L1183.4 291.0L1193.7 290.6L1204.0 290.5L1214.3 290.6L1224.6 291.0L1234.9 291.6L1245.2 292.4L1255.4 293.5L1265.6 294.8L1275.7 296.4L1285.7 298.2L1295.7 300.2L1305.5 302.5L1315.3 305.0L1324.9 307.7L1334.5 310.7L1343.8 313.9L1353.1 317.3L1362.1 320.9L1371.0 324.7L1379.8 328.8L1388.3 333.0L1396.6 337.5L1404.8 342.1L1412.7 347.0L1420.4 352.0L1427.8 357.2L1435.0 362.7L1441.9 368.2L1448.6 374.0L1455.0 379.9L1461.1 386.0L1466.9 392.2L1472.4 398.6L1477.7 405.1L1482.6 411.8L1487.1 418.5L1491.4 425.4L1495.3 432.4L1498.8 439.5L1502.0 446.7L1504.9 454.0L1507.3 461.4L1509.5 468.8L1511.2 476.3L1512.6 483.8L1513.5 491.4L1514.1 499.0Z" fill="#7b7b7b" stroke="#7b7b7b" stroke-width=".3"/>
<path d="M1505.3 499.0L1504.7 491.6L1503.8 484.2L1502.5 476.9L1500.8 469.6L1498.8 462.4L1496.4 455.3L1493.7 448.2L1490.6 441.2L1487.2 434.3L1483.4 427.4L1479.3 420.7L1474.9 414.2L1470.1 407.7L1465.1 401.3L1459.7 395.1L1454.1 389.1L1448.2 383.1L1442.0 377.4L1435.5 371.8L1428.8 366.3L1421.8 361.1L1414.5 356.0L1407.1 351.1L1399.4 346.3L1391.5 341.8L1383.4 337.4L1375.1 333.3L1366.6 329.4L1358.0 325.6L1349.1 322.1L1340.2 318.8L1331.0 315.7L1321.8 312.8L1312.4 310.1L1302.9 307.7L1293.3 305.5L1283.6 303.5L1273.9 301.8L1264.0 300.2L1254.1 298.9L1244.2 297.9L1234.2 297.1L1224.2 296.5L1214.1 296.1L1204.1 296.0L1194.0 296.1L1184.0 296.5L1174.0 297.1L1164.0 297.9L1154.1 298.9L1144.3 300.2L1134.5 301.8L1124.8 303.5L1115.1 305.5L1105.6 307.7L1096.2 310.1L1086.9 312.8L1077.7 315.7L1068.7 318.8L1059.8 322.1L1051.1 325.6L1042.6 329.4L1034.2 333.3L1026.0 337.4L1018.0 341.8L1010.3 346.3L1002.7 351.1L995.4 356.0L988.4 361.1L981.5 366.3L975.0 371.8L968.7 377.4L962.6 383.1L956.9 389.1L951.4 395.1L946.3 401.3L941.4 407.7L936.9 414.2L932.6 420.7L928.7 427.4L925.2 434.3L922.0 441.2L919.1 448.2L916.6 455.3L914.4 462.4L912.6 469.6L911.1 476.9L910.1 484.2L909.4 491.6L909.0 499.0L909.2 502.1L909.6 494.7L910.3 487.4L911.3 480.0L912.8 472.8L914.6 465.5L916.8 458.4L919.3 451.3L922.1 444.3L925.4 437.4L928.9 430.6L932.8 423.9L937.0 417.3L941.6 410.8L946.4 404.5L951.6 398.2L957.0 392.2L962.8 386.3L968.8 380.5L975.1 374.9L981.7 369.4L988.5 364.2L995.6 359.1L1002.9 354.2L1010.4 349.4L1018.2 344.9L1026.1 340.6L1034.3 336.4L1042.6 332.5L1051.2 328.7L1059.9 325.2L1068.8 321.9L1077.8 318.8L1086.9 315.9L1096.2 313.2L1105.6 310.8L1115.2 308.6L1124.8 306.6L1134.5 304.9L1144.3 303.3L1154.1 302.0L1164.0 301.0L1174.0 300.2L1184.0 299.6L1194.0 299.2L1204.0 299.1L1214.1 299.2L1224.1 299.6L1234.1 300.2L1244.1 301.0L1254.0 302.0L1263.9 303.3L1273.8 304.9L1283.5 306.6L1293.2 308.6L1302.8 310.8L1312.3 313.2L1321.6 315.9L1330.9 318.8L1340.0 321.9L1349.0 325.2L1357.8 328.7L1366.4 332.5L1374.9 336.4L1383.2 340.6L1391.3 344.9L1399.2 349.4L1406.9 354.2L1414.3 359.1L1421.5 364.2L1428.5 369.4L1435.3 374.9L1441.7 380.5L1447.9 386.3L1453.8 392.2L1459.5 398.2L1464.8 404.5L1469.9 410.8L1474.6 417.3L1479.0 423.9L1483.1 430.6L1486.9 437.4L1490.3 444.3L1493.4 451.3L1496.1 458.4L1498.5 465.5L1500.5 472.8L1502.2 480.0L1503.5 487.4L1504.4 494.7L1505.0 502.1Z" fill="#7b7b7b" stroke="#7b7b7b" stroke-width=".3"/>
<path d="M1495.0 502.1L1494.5 495.0L1493.7 487.8L1492.4 480.7L1490.9 473.7L1488.9 466.7L1486.7 459.8L1484.0 452.9L1481.1 446.1L1477.8 439.4L1474.2 432.8L1470.2 426.3L1466.0 420.0L1461.4 413.7L1456.6 407.5L1451.4 401.5L1446.0 395.6L1440.2 389.9L1434.3 384.3L1428.0 378.9L1421.5 373.6L1414.8 368.5L1407.8 363.5L1400.6 358.8L1393.2 354.2L1385.5 349.8L1377.7 345.5L1369.7 341.5L1361.5 337.7L1353.1 334.1L1344.6 330.6L1335.9 327.4L1327.0 324.4L1318.1 321.6L1309.0 319.0L1299.8 316.7L1290.5 314.5L1281.2 312.6L1271.7 310.9L1262.2 309.4L1252.6 308.1L1242.9 307.1L1233.3 306.3L1223.6 305.7L1213.9 305.4L1204.1 305.3L1194.4 305.4L1184.7 305.7L1175.0 306.3L1165.4 307.1L1155.8 308.1L1146.2 309.4L1136.7 310.9L1127.3 312.6L1118.0 314.5L1108.8 316.7L1099.7 319.0L1090.7 321.6L1081.8 324.4L1073.1 327.4L1064.5 330.6L1056.0 334.1L1047.8 337.7L1039.7 341.5L1031.8 345.5L1024.1 349.8L1016.6 354.2L1009.3 358.8L1002.2 363.5L995.4 368.5L988.8 373.6L982.5 378.9L976.4 384.3L970.6 389.9L965.0 395.6L959.8 401.5L954.8 407.5L950.1 413.7L945.7 420.0L941.7 426.3L937.9 432.8L934.5 439.4L931.4 446.1L928.7 452.9L926.3 459.8L924.2 466.7L922.5 473.7L921.1 480.7L920.1 487.8L919.5 495.0L919.2 502.1L919.4 505.2L919.7 498.1L920.3 491.0L921.3 483.9L922.7 476.8L924.4 469.8L926.5 462.9L928.9 456.0L931.6 449.2L934.7 442.6L938.1 436.0L941.9 429.5L945.9 423.1L950.3 416.8L955.0 410.6L959.9 404.6L965.2 398.7L970.7 393.0L976.5 387.4L982.6 382.0L988.9 376.7L995.5 371.6L1002.4 366.6L1009.4 361.9L1016.7 357.3L1024.2 352.9L1031.9 348.7L1039.8 344.6L1047.9 340.8L1056.1 337.2L1064.5 333.7L1073.1 330.5L1081.9 327.5L1090.7 324.7L1099.7 322.1L1108.8 319.8L1118.0 317.6L1127.3 315.7L1136.7 314.0L1146.2 312.5L1155.8 311.2L1165.4 310.2L1175.0 309.4L1184.7 308.8L1194.4 308.5L1204.1 308.4L1213.8 308.5L1223.5 308.8L1233.2 309.4L1242.9 310.2L1252.5 311.2L1262.1 312.5L1271.6 314.0L1281.1 315.7L1290.4 317.6L1299.7 319.8L1308.9 322.1L1318.0 324.7L1326.9 327.5L1335.7 330.5L1344.4 333.7L1352.9 337.2L1361.3 340.8L1369.5 344.6L1377.5 348.7L1385.3 352.9L1393.0 357.3L1400.4 361.9L1407.6 366.6L1414.6 371.6L1421.3 376.7L1427.8 382.0L1434.0 387.4L1440.0 393.0L1445.7 398.7L1451.2 404.6L1456.3 410.6L1461.2 416.8L1465.7 423.1L1470.0 429.5L1473.9 436.0L1477.5 442.6L1480.8 449.2L1483.8 456.0L1486.4 462.9L1488.7 469.8L1490.6 476.8L1492.2 483.9L1493.4 491.0L1494.2 498.1L1494.7 505.2Z" fill="#7b7b7b" stroke="#7b7b7b" stroke-width=".3"/>
<path d="M1486.1 505.2L1485.6 498.3L1484.8 491.4L1483.7 484.5L1482.2 477.6L1480.3 470.8L1478.1 464.1L1475.6 457.5L1472.8 450.9L1469.6 444.4L1466.1 437.9L1462.3 431.6L1458.2 425.4L1453.8 419.3L1449.1 413.3L1444.1 407.5L1438.8 401.8L1433.3 396.2L1427.5 390.7L1421.5 385.4L1415.2 380.3L1408.6 375.3L1401.9 370.5L1394.9 365.9L1387.7 361.4L1380.3 357.1L1372.7 353.0L1364.9 349.1L1356.9 345.4L1348.8 341.8L1340.5 338.5L1332.1 335.4L1323.5 332.4L1314.8 329.7L1306.0 327.2L1297.1 324.9L1288.1 322.8L1279.0 320.9L1269.8 319.3L1260.5 317.8L1251.2 316.6L1241.9 315.6L1232.5 314.8L1223.1 314.3L1213.6 313.9L1204.2 313.8L1194.7 313.9L1185.3 314.3L1175.9 314.8L1166.5 315.6L1157.2 316.6L1147.9 317.8L1138.7 319.3L1129.6 320.9L1120.5 322.8L1111.6 324.9L1102.7 327.2L1094.0 329.7L1085.4 332.4L1076.9 335.4L1068.6 338.5L1060.4 341.8L1052.4 345.4L1044.5 349.1L1036.8 353.0L1029.4 357.1L1022.1 361.4L1015.0 365.9L1008.2 370.5L1001.6 375.3L995.2 380.3L989.0 385.4L983.1 390.7L977.5 396.2L972.1 401.8L967.1 407.5L962.3 413.3L957.7 419.3L953.5 425.4L949.6 431.6L946.0 437.9L942.7 444.4L939.7 450.9L937.1 457.5L934.8 464.1L932.8 470.8L931.1 477.6L929.8 484.5L928.9 491.4L928.3 498.3L928.0 505.2L928.2 508.4L928.5 501.4L929.1 494.5L930.0 487.6L931.3 480.7L932.9 474.0L934.9 467.2L937.2 460.6L939.9 454.0L942.9 447.5L946.2 441.1L949.8 434.7L953.7 428.5L957.9 422.4L962.4 416.4L967.2 410.6L972.3 404.9L977.7 399.3L983.3 393.8L989.2 388.6L995.3 383.4L1001.7 378.4L1008.3 373.6L1015.1 369.0L1022.2 364.5L1029.5 360.2L1036.9 356.1L1044.6 352.2L1052.4 348.5L1060.4 344.9L1068.6 341.6L1076.9 338.5L1085.4 335.5L1094.0 332.8L1102.8 330.3L1111.6 328.0L1120.5 325.9L1129.6 324.0L1138.7 322.4L1147.9 320.9L1157.2 319.7L1166.5 318.7L1175.9 317.9L1185.3 317.3L1194.7 317.0L1204.1 316.9L1213.6 317.0L1223.0 317.3L1232.4 317.9L1241.8 318.7L1251.2 319.7L1260.5 320.9L1269.7 322.4L1278.9 324.0L1288.0 325.9L1297.0 328.0L1305.9 330.3L1314.7 332.8L1323.4 335.5L1332.0 338.5L1340.4 341.6L1348.7 344.9L1356.8 348.5L1364.7 352.2L1372.5 356.1L1380.1 360.2L1387.5 364.5L1394.7 369.0L1401.7 373.6L1408.4 378.4L1415.0 383.4L1421.3 388.6L1427.3 393.8L1433.1 399.3L1438.6 404.9L1443.9 410.6L1448.9 416.4L1453.5 422.4L1457.9 428.5L1462.1 434.7L1465.8 441.1L1469.3 447.5L1472.5 454.0L1475.3 460.6L1477.9 467.2L1480.0 474.0L1481.9 480.7L1483.4 487.6L1484.5 494.5L1485.4 501.4L1485.8 508.4Z" fill="#7b7b7b" stroke="#7b7b7b" stroke-width=".3"/>
<path d="M1477.0 508.4L1476.6 501.6L1475.9 494.9L1474.8 488.2L1473.4 481.6L1471.6 475.0L1469.5 468.5L1467.1 462.0L1464.3 455.6L1461.3 449.3L1457.9 443.1L1454.3 436.9L1450.3 430.9L1446.1 425.0L1441.5 419.2L1436.7 413.5L1431.6 407.9L1426.3 402.5L1420.7 397.2L1414.8 392.1L1408.7 387.1L1402.4 382.2L1395.9 377.6L1389.1 373.1L1382.1 368.7L1375.0 364.5L1367.6 360.6L1360.1 356.7L1352.4 353.1L1344.5 349.7L1336.5 346.4L1328.3 343.4L1320.0 340.5L1311.6 337.9L1303.0 335.4L1294.4 333.2L1285.6 331.2L1276.8 329.3L1267.9 327.7L1258.9 326.3L1249.9 325.1L1240.8 324.1L1231.7 323.4L1222.5 322.8L1213.4 322.5L1204.2 322.4L1195.0 322.5L1185.9 322.8L1176.8 323.4L1167.7 324.1L1158.6 325.1L1149.6 326.3L1140.7 327.7L1131.8 329.3L1123.1 331.2L1114.4 333.2L1105.8 335.4L1097.3 337.9L1089.0 340.5L1080.8 343.4L1072.7 346.4L1064.8 349.7L1057.0 353.1L1049.4 356.7L1042.0 360.6L1034.7 364.5L1027.7 368.7L1020.8 373.1L1014.2 377.6L1007.8 382.2L1001.6 387.1L995.7 392.1L990.0 397.2L984.5 402.5L979.4 407.9L974.4 413.5L969.8 419.2L965.4 425.0L961.4 430.9L957.6 436.9L954.1 443.1L951.0 449.3L948.1 455.6L945.6 462.0L943.3 468.5L941.4 475.0L939.9 481.6L938.6 488.2L937.8 494.9L937.2 501.6L937.0 508.4L937.2 511.5L937.4 504.7L937.9 498.0L938.8 491.3L940.0 484.7L941.6 478.1L943.5 471.6L945.7 465.1L948.3 458.7L951.1 452.4L954.3 446.2L957.8 440.0L961.5 434.0L965.6 428.1L970.0 422.3L974.6 416.6L979.5 411.0L984.7 405.6L990.1 400.3L995.8 395.2L1001.7 390.2L1007.9 385.3L1014.3 380.7L1020.9 376.2L1027.8 371.8L1034.8 367.6L1042.0 363.6L1049.5 359.8L1057.1 356.2L1064.8 352.8L1072.7 349.5L1080.8 346.5L1089.0 343.6L1097.4 341.0L1105.8 338.5L1114.4 336.3L1123.1 334.2L1131.9 332.4L1140.7 330.8L1149.6 329.4L1158.6 328.2L1167.7 327.2L1176.8 326.5L1185.9 325.9L1195.0 325.6L1204.2 325.5L1213.3 325.6L1222.5 325.9L1231.6 326.5L1240.7 327.2L1249.8 328.2L1258.8 329.4L1267.8 330.8L1276.7 332.4L1285.5 334.2L1294.2 336.3L1302.9 338.5L1311.4 341.0L1319.9 343.6L1328.1 346.5L1336.3 349.5L1344.3 352.8L1352.2 356.2L1359.9 359.8L1367.4 363.6L1374.8 367.6L1382.0 371.8L1388.9 376.2L1395.7 380.7L1402.2 385.3L1408.5 390.2L1414.6 395.2L1420.5 400.3L1426.1 405.6L1431.4 411.0L1436.5 416.6L1441.3 422.3L1445.8 428.1L1450.1 434.0L1454.0 440.0L1457.7 446.2L1461.0 452.4L1464.1 458.7L1466.8 465.1L1469.2 471.6L1471.3 478.1L1473.1 484.7L1474.5 491.3L1475.6 498.0L1476.4 504.7L1476.8 511.5Z" fill="#7b7b7b" stroke="#7b7b7b" stroke-width=".3"/>
<path d="M1468.5 511.5L1468.2 504.9L1467.5 498.4L1466.4 491.9L1465.1 485.5L1463.4 479.1L1461.4 472.7L1459.1 466.5L1456.4 460.3L1453.5 454.1L1450.3 448.1L1446.7 442.1L1442.9 436.3L1438.8 430.5L1434.4 424.9L1429.8 419.3L1424.8 413.9L1419.7 408.6L1414.3 403.5L1408.6 398.5L1402.7 393.6L1396.6 388.9L1390.2 384.4L1383.7 380.0L1376.9 375.8L1370.0 371.7L1362.8 367.8L1355.5 364.1L1348.0 360.6L1340.4 357.2L1332.6 354.1L1324.7 351.1L1316.6 348.3L1308.5 345.8L1300.2 343.4L1291.8 341.2L1283.3 339.2L1274.7 337.4L1266.1 335.9L1257.3 334.5L1248.6 333.3L1239.8 332.4L1230.9 331.6L1222.0 331.1L1213.1 330.8L1204.2 330.7L1195.4 330.8L1186.5 331.1L1177.6 331.6L1168.8 332.4L1160.0 333.3L1151.3 334.5L1142.6 335.9L1134.0 337.4L1125.5 339.2L1117.0 341.2L1108.7 343.4L1100.5 345.8L1092.4 348.3L1084.4 351.1L1076.6 354.1L1068.9 357.2L1061.4 360.6L1054.0 364.1L1046.8 367.8L1039.8 371.7L1032.9 375.8L1026.3 380.0L1019.9 384.4L1013.7 388.9L1007.7 393.6L1001.9 398.5L996.4 403.5L991.2 408.6L986.2 413.9L981.4 419.3L976.9 424.9L972.7 430.5L968.8 436.3L965.1 442.1L961.8 448.1L958.7 454.1L956.0 460.3L953.5 466.5L951.4 472.7L949.6 479.1L948.1 485.5L946.9 491.9L946.1 498.4L945.6 504.9L945.4 511.5L945.6 514.6L945.7 508.0L946.3 501.5L947.1 495.0L948.3 488.6L949.8 482.2L951.6 475.8L953.7 469.6L956.1 463.3L958.9 457.2L961.9 451.2L965.3 445.2L968.9 439.3L972.9 433.6L977.1 427.9L981.5 422.4L986.3 417.0L991.3 411.7L996.6 406.6L1002.1 401.6L1007.8 396.7L1013.8 392.0L1020.0 387.5L1026.4 383.1L1033.0 378.9L1039.9 374.8L1046.9 370.9L1054.1 367.2L1061.4 363.7L1069.0 360.3L1076.6 357.2L1084.5 354.2L1092.4 351.4L1100.5 348.8L1108.8 346.5L1117.1 344.3L1125.5 342.3L1134.0 340.5L1142.6 338.9L1151.3 337.6L1160.0 336.4L1168.8 335.5L1177.6 334.7L1186.4 334.2L1195.3 333.9L1204.2 333.8L1213.1 333.9L1222.0 334.2L1230.9 334.7L1239.7 335.5L1248.5 336.4L1257.3 337.6L1266.0 338.9L1274.6 340.5L1283.2 342.3L1291.7 344.3L1300.0 346.5L1308.3 348.8L1316.5 351.4L1324.6 354.2L1332.5 357.2L1340.3 360.3L1347.9 363.7L1355.4 367.2L1362.7 370.9L1369.8 374.8L1376.7 378.9L1383.5 383.1L1390.0 387.5L1396.4 392.0L1402.5 396.7L1408.4 401.6L1414.0 406.6L1419.5 411.7L1424.6 417.0L1429.5 422.4L1434.2 427.9L1438.6 433.6L1442.7 439.3L1446.5 445.2L1450.0 451.2L1453.2 457.2L1456.2 463.3L1458.8 469.6L1461.1 475.8L1463.1 482.2L1464.8 488.6L1466.2 495.0L1467.2 501.5L1467.9 508.0L1468.3 514.6Z" fill="#7b7b7b" stroke="#7b7b7b" stroke-width=".3"/>
<path d="M1459.2 514.6L1458.9 508.2L1458.2 501.9L1457.3 495.7L1456.0 489.4L1454.4 483.3L1452.5 477.1L1450.3 471.1L1447.7 465.0L1444.9 459.1L1441.8 453.3L1438.4 447.5L1434.8 441.8L1430.8 436.2L1426.6 430.8L1422.1 425.4L1417.4 420.2L1412.4 415.1L1407.2 410.1L1401.7 405.3L1396.0 400.6L1390.1 396.0L1384.0 391.6L1377.7 387.3L1371.2 383.2L1364.5 379.3L1357.6 375.5L1350.5 371.9L1343.3 368.5L1335.9 365.3L1328.4 362.2L1320.7 359.3L1313.0 356.6L1305.0 354.1L1297.0 351.8L1288.9 349.7L1280.7 347.8L1272.4 346.0L1264.1 344.5L1255.6 343.2L1247.2 342.1L1238.6 341.1L1230.1 340.4L1221.5 339.9L1212.9 339.6L1204.3 339.5L1195.7 339.6L1187.1 339.9L1178.5 340.4L1170.0 341.1L1161.5 342.1L1153.1 343.2L1144.7 344.5L1136.4 346.0L1128.1 347.8L1120.0 349.7L1111.9 351.8L1104.0 354.1L1096.1 356.6L1088.4 359.3L1080.9 362.2L1073.4 365.3L1066.2 368.5L1059.0 371.9L1052.1 375.5L1045.3 379.3L1038.7 383.2L1032.3 387.3L1026.1 391.6L1020.1 396.0L1014.4 400.6L1008.8 405.3L1003.5 410.1L998.4 415.1L993.6 420.2L989.0 425.4L984.7 430.8L980.7 436.2L976.9 441.8L973.4 447.5L970.2 453.3L967.3 459.1L964.6 465.0L962.3 471.1L960.3 477.1L958.5 483.3L957.1 489.4L956.0 495.7L955.2 501.9L954.8 508.2L954.6 514.6L955.0 522.5L955.2 516.2L955.6 509.9L956.4 503.7L957.5 497.4L958.9 491.2L960.7 485.1L962.7 479.0L965.0 473.0L967.6 467.1L970.6 461.2L973.8 455.5L977.3 449.8L981.0 444.2L985.1 438.8L989.4 433.4L993.9 428.2L998.8 423.1L1003.8 418.1L1009.1 413.2L1014.7 408.5L1020.4 404.0L1026.4 399.6L1032.6 395.3L1039.0 391.2L1045.5 387.3L1052.3 383.5L1059.2 379.9L1066.3 376.5L1073.6 373.2L1081.0 370.2L1088.6 367.3L1096.3 364.6L1104.1 362.1L1112.0 359.8L1120.0 357.7L1128.2 355.7L1136.4 354.0L1144.7 352.5L1153.1 351.2L1161.5 350.0L1170.0 349.1L1178.5 348.4L1187.0 347.9L1195.6 347.6L1204.2 347.5L1212.8 347.6L1221.4 347.9L1229.9 348.4L1238.5 349.1L1247.0 350.0L1255.4 351.2L1263.8 352.5L1272.2 354.0L1280.4 355.7L1288.6 357.7L1296.7 359.8L1304.7 362.1L1312.6 364.6L1320.4 367.3L1328.0 370.2L1335.5 373.2L1342.9 376.5L1350.1 379.9L1357.2 383.5L1364.0 387.3L1370.7 391.2L1377.2 395.3L1383.5 399.6L1389.6 404.0L1395.5 408.5L1401.2 413.2L1406.7 418.1L1411.9 423.1L1416.8 428.2L1421.6 433.4L1426.0 438.8L1430.2 444.2L1434.2 449.8L1437.8 455.5L1441.2 461.2L1444.3 467.1L1447.1 473.0L1449.6 479.0L1451.8 485.1L1453.7 491.2L1455.3 497.4L1456.6 503.7L1457.6 509.9L1458.2 516.2L1458.6 522.5Z" fill="#7b7b7b" stroke="#7b7b7b" stroke-width=".3"/>
<path d="M1441.8 522.5L1441.5 516.6L1441.0 510.7L1440.1 504.9L1439.0 499.0L1437.5 493.3L1435.8 487.5L1433.7 481.8L1431.4 476.2L1428.9 470.6L1426.0 465.1L1422.9 459.7L1419.5 454.4L1415.8 449.2L1411.9 444.0L1407.8 439.0L1403.4 434.1L1398.8 429.3L1393.9 424.6L1388.8 420.1L1383.5 415.6L1378.1 411.4L1372.4 407.2L1366.5 403.2L1360.4 399.4L1354.1 395.7L1347.7 392.1L1341.1 388.7L1334.4 385.5L1327.5 382.4L1320.4 379.6L1313.3 376.8L1306.0 374.3L1298.6 372.0L1291.1 369.8L1283.5 367.8L1275.9 366.0L1268.1 364.3L1260.3 362.9L1252.4 361.6L1244.5 360.6L1236.5 359.7L1228.5 359.0L1220.4 358.6L1212.4 358.3L1204.3 358.2L1196.3 358.3L1188.3 358.6L1180.2 359.0L1172.2 359.7L1164.3 360.6L1156.4 361.6L1148.5 362.9L1140.8 364.3L1133.1 366.0L1125.4 367.8L1117.9 369.8L1110.5 372.0L1103.2 374.3L1096.0 376.8L1088.9 379.6L1081.9 382.4L1075.1 385.5L1068.5 388.7L1062.0 392.1L1055.7 395.7L1049.5 399.4L1043.6 403.2L1037.8 407.2L1032.2 411.4L1026.9 415.6L1021.7 420.1L1016.8 424.6L1012.1 429.3L1007.6 434.1L1003.3 439.0L999.3 444.0L995.6 449.2L992.1 454.4L988.9 459.7L985.9 465.1L983.2 470.6L980.8 476.2L978.6 481.8L976.8 487.5L975.2 493.3L974.0 499.0L973.0 504.9L972.3 510.7L971.9 516.6L971.8 522.5L972.0 525.6L972.1 519.7L972.4 513.8L973.1 508.0L974.1 502.1L975.4 496.3L976.9 490.6L978.8 484.9L980.9 479.3L983.3 473.7L986.0 468.2L989.0 462.8L992.2 457.5L995.7 452.3L999.5 447.1L1003.4 442.1L1007.7 437.2L1012.2 432.4L1016.9 427.7L1021.8 423.1L1027.0 418.7L1032.3 414.4L1037.9 410.3L1043.7 406.3L1049.6 402.4L1055.8 398.7L1062.1 395.2L1068.6 391.8L1075.2 388.6L1082.0 385.5L1088.9 382.6L1096.0 379.9L1103.2 377.4L1110.5 375.0L1117.9 372.8L1125.5 370.8L1133.1 369.0L1140.8 367.4L1148.6 366.0L1156.4 364.7L1164.3 363.7L1172.2 362.8L1180.2 362.1L1188.2 361.6L1196.3 361.3L1204.3 361.2L1212.4 361.3L1220.4 361.6L1228.4 362.1L1236.4 362.8L1244.4 363.7L1252.3 364.7L1260.2 366.0L1268.0 367.4L1275.8 369.0L1283.4 370.8L1291.0 372.8L1298.5 375.0L1305.9 377.4L1313.2 379.9L1320.3 382.6L1327.3 385.5L1334.2 388.6L1341.0 391.8L1347.5 395.2L1354.0 398.7L1360.2 402.4L1366.3 406.3L1372.2 410.3L1377.9 414.4L1383.4 418.7L1388.6 423.1L1393.7 427.7L1398.6 432.4L1403.2 437.2L1407.6 442.1L1411.7 447.1L1415.6 452.3L1419.3 457.5L1422.7 462.8L1425.8 468.2L1428.6 473.7L1431.2 479.3L1433.5 484.9L1435.5 490.6L1437.3 496.3L1438.7 502.1L1439.9 508.0L1440.7 513.8L1441.3 519.7L1441.5 525.6Z" fill="#7b7b7b" stroke="#7b7b7b" stroke-width=".3"/>
<path d="M1431.8 525.6L1431.6 519.9L1431.1 514.3L1430.3 508.7L1429.2 503.1L1427.9 497.5L1426.2 492.0L1424.3 486.5L1422.1 481.1L1419.7 475.8L1417.0 470.5L1414.0 465.3L1410.8 460.2L1407.3 455.1L1403.6 450.2L1399.6 445.4L1395.4 440.6L1391.0 436.0L1386.3 431.5L1381.5 427.1L1376.4 422.9L1371.2 418.7L1365.7 414.7L1360.0 410.9L1354.2 407.2L1348.2 403.6L1342.1 400.2L1335.7 396.9L1329.3 393.8L1322.7 390.9L1315.9 388.1L1309.0 385.5L1302.1 383.0L1295.0 380.7L1287.8 378.6L1280.5 376.7L1273.1 375.0L1265.7 373.4L1258.1 372.0L1250.6 370.8L1242.9 369.8L1235.3 369.0L1227.6 368.3L1219.9 367.8L1212.1 367.6L1204.4 367.5L1196.7 367.6L1188.9 367.8L1181.2 368.3L1173.6 369.0L1165.9 369.8L1158.3 370.8L1150.8 372.0L1143.3 373.4L1135.9 375.0L1128.6 376.7L1121.4 378.6L1114.2 380.7L1107.2 383.0L1100.3 385.5L1093.5 388.1L1086.8 390.9L1080.3 393.8L1073.9 396.9L1067.7 400.2L1061.7 403.6L1055.8 407.2L1050.0 410.9L1044.5 414.7L1039.2 418.7L1034.0 422.9L1029.1 427.1L1024.4 431.5L1019.9 436.0L1015.6 440.6L1011.5 445.4L1007.7 450.2L1004.1 455.1L1000.8 460.2L997.7 465.3L994.9 470.5L992.3 475.8L990.0 481.1L988.0 486.5L986.3 492.0L984.8 497.5L983.6 503.1L982.7 508.7L982.1 514.3L981.7 519.9L981.7 525.6L981.8 528.7L981.9 523.0L982.2 517.4L982.8 511.7L983.7 506.1L984.9 500.6L986.4 495.1L988.2 489.6L990.2 484.2L992.5 478.8L995.0 473.5L997.8 468.3L1000.9 463.2L1004.2 458.2L1007.8 453.3L1011.6 448.4L1015.7 443.7L1020.0 439.1L1024.5 434.6L1029.2 430.2L1034.1 425.9L1039.3 421.8L1044.6 417.8L1050.1 413.9L1055.8 410.2L1061.7 406.7L1067.8 403.2L1074.0 400.0L1080.4 396.9L1086.9 393.9L1093.5 391.2L1100.3 388.5L1107.2 386.1L1114.3 383.8L1121.4 381.7L1128.6 379.8L1135.9 378.0L1143.3 376.5L1150.8 375.1L1158.3 373.9L1165.9 372.9L1173.5 372.0L1181.2 371.4L1188.9 370.9L1196.6 370.6L1204.4 370.5L1212.1 370.6L1219.8 370.9L1227.5 371.4L1235.2 372.0L1242.9 372.9L1250.5 373.9L1258.1 375.1L1265.6 376.5L1273.0 378.0L1280.4 379.8L1287.7 381.7L1294.8 383.8L1301.9 386.1L1308.9 388.5L1315.8 391.2L1322.5 393.9L1329.1 396.9L1335.6 400.0L1341.9 403.2L1348.1 406.7L1354.1 410.2L1359.9 413.9L1365.5 417.8L1371.0 421.8L1376.2 425.9L1381.3 430.2L1386.2 434.6L1390.8 439.1L1395.2 443.7L1399.4 448.4L1403.4 453.3L1407.1 458.2L1410.6 463.2L1413.8 468.3L1416.8 473.5L1419.5 478.8L1421.9 484.2L1424.1 489.6L1426.0 495.1L1427.7 500.6L1429.0 506.1L1430.1 511.7L1430.9 517.4L1431.4 523.0L1431.6 528.7Z" fill="#7b7b7b" stroke="#7b7b7b" stroke-width=".3"/>
<path d="M1421.9 528.7L1421.7 523.3L1421.3 517.8L1420.6 512.4L1419.6 507.1L1418.3 501.7L1416.7 496.4L1414.9 491.2L1412.9 486.0L1410.5 480.9L1408.0 475.8L1405.1 470.8L1402.1 465.9L1398.7 461.1L1395.2 456.3L1391.4 451.7L1387.4 447.1L1383.2 442.7L1378.8 438.4L1374.1 434.2L1369.3 430.1L1364.2 426.1L1359.0 422.2L1353.6 418.5L1348.1 415.0L1342.3 411.5L1336.4 408.3L1330.4 405.1L1324.2 402.1L1317.8 399.3L1311.4 396.6L1304.8 394.1L1298.1 391.7L1291.3 389.6L1284.4 387.5L1277.4 385.7L1270.3 384.0L1263.2 382.5L1256.0 381.2L1248.7 380.0L1241.4 379.0L1234.1 378.2L1226.7 377.6L1219.3 377.1L1211.9 376.9L1204.4 376.8L1197.0 376.9L1189.6 377.1L1182.2 377.6L1174.9 378.2L1167.5 379.0L1160.3 380.0L1153.0 381.2L1145.9 382.5L1138.8 384.0L1131.8 385.7L1124.8 387.5L1118.0 389.6L1111.3 391.7L1104.6 394.1L1098.1 396.6L1091.7 399.3L1085.5 402.1L1079.4 405.1L1073.4 408.3L1067.6 411.5L1062.0 415.0L1056.5 418.5L1051.2 422.2L1046.1 426.1L1041.2 430.1L1036.5 434.2L1032.0 438.4L1027.7 442.7L1023.6 447.1L1019.7 451.7L1016.1 456.3L1012.7 461.1L1009.5 465.9L1006.6 470.8L1003.9 475.8L1001.5 480.9L999.3 486.0L997.4 491.2L995.7 496.4L994.3 501.7L993.2 507.1L992.4 512.4L991.8 517.8L991.5 523.3L991.5 528.7L991.6 531.8L991.7 526.3L992.0 520.9L992.5 515.5L993.4 510.1L994.5 504.8L995.9 499.5L997.5 494.3L999.4 489.1L1001.6 483.9L1004.0 478.9L1006.7 473.9L1009.6 469.0L1012.8 464.1L1016.2 459.4L1019.8 454.7L1023.7 450.2L1027.8 445.8L1032.1 441.4L1036.6 437.2L1041.3 433.1L1046.2 429.2L1051.3 425.3L1056.6 421.6L1062.1 418.0L1067.7 414.6L1073.5 411.3L1079.4 408.2L1085.5 405.2L1091.8 402.4L1098.2 399.7L1104.7 397.2L1111.3 394.8L1118.0 392.6L1124.8 390.6L1131.8 388.7L1138.8 387.1L1145.9 385.6L1153.0 384.2L1160.3 383.1L1167.5 382.1L1174.9 381.3L1182.2 380.6L1189.6 380.2L1197.0 379.9L1204.4 379.8L1211.8 379.9L1219.2 380.2L1226.6 380.6L1234.0 381.3L1241.4 382.1L1248.7 383.1L1255.9 384.2L1263.1 385.6L1270.2 387.1L1277.3 388.7L1284.3 390.6L1291.2 392.6L1298.0 394.8L1304.7 397.2L1311.2 399.7L1317.7 402.4L1324.0 405.2L1330.2 408.2L1336.3 411.3L1342.2 414.6L1347.9 418.0L1353.5 421.6L1358.9 425.3L1364.1 429.2L1369.1 433.1L1373.9 437.2L1378.6 441.4L1383.0 445.8L1387.2 450.2L1391.2 454.7L1395.0 459.4L1398.5 464.1L1401.9 469.0L1404.9 473.9L1407.8 478.9L1410.3 483.9L1412.7 489.1L1414.7 494.3L1416.5 499.5L1418.1 504.8L1419.3 510.1L1420.3 515.5L1421.1 520.9L1421.5 526.3L1421.7 531.8Z" fill="#7b7b7b" stroke="#7b7b7b" stroke-width=".3"/>
<path d="M1412.5 531.8L1412.4 526.6L1412.0 521.4L1411.3 516.2L1410.4 511.0L1409.2 505.9L1407.7 500.8L1406.0 495.8L1404.1 490.8L1401.9 485.9L1399.4 481.0L1396.7 476.2L1393.8 471.5L1390.6 466.9L1387.3 462.3L1383.7 457.8L1379.8 453.5L1375.8 449.2L1371.6 445.0L1367.1 441.0L1362.5 437.0L1357.7 433.2L1352.7 429.5L1347.5 426.0L1342.2 422.5L1336.7 419.2L1331.1 416.1L1325.3 413.0L1319.3 410.2L1313.3 407.4L1307.1 404.9L1300.8 402.4L1294.3 400.2L1287.8 398.1L1281.2 396.1L1274.5 394.3L1267.7 392.7L1260.9 391.3L1254.0 390.0L1247.0 388.9L1240.0 387.9L1232.9 387.1L1225.8 386.5L1218.7 386.1L1211.6 385.8L1204.5 385.8L1197.4 385.8L1190.3 386.1L1183.2 386.5L1176.1 387.1L1169.1 387.9L1162.1 388.9L1155.2 390.0L1148.3 391.3L1141.5 392.7L1134.8 394.3L1128.1 396.1L1121.5 398.1L1115.1 400.2L1108.7 402.4L1102.5 404.9L1096.4 407.4L1090.4 410.2L1084.5 413.0L1078.8 416.1L1073.3 419.2L1067.9 422.5L1062.7 426.0L1057.6 429.5L1052.7 433.2L1048.0 437.0L1043.5 441.0L1039.2 445.0L1035.1 449.2L1031.2 453.5L1027.5 457.8L1024.0 462.3L1020.8 466.9L1017.7 471.5L1015.0 476.2L1012.4 481.0L1010.1 485.9L1008.0 490.8L1006.2 495.8L1004.7 500.8L1003.4 505.9L1002.3 511.0L1001.6 516.2L1001.0 521.4L1000.8 526.6L1000.8 531.8L1000.9 534.8L1000.9 529.6L1001.2 524.4L1001.7 519.2L1002.5 514.1L1003.5 509.0L1004.8 503.9L1006.4 498.9L1008.2 493.9L1010.2 488.9L1012.5 484.1L1015.1 479.3L1017.9 474.6L1020.9 469.9L1024.1 465.4L1027.6 460.9L1031.3 456.5L1035.2 452.3L1039.3 448.1L1043.6 444.0L1048.1 440.1L1052.8 436.3L1057.7 432.6L1062.7 429.0L1068.0 425.6L1073.3 422.3L1078.9 419.1L1084.6 416.1L1090.4 413.2L1096.4 410.5L1102.5 407.9L1108.8 405.5L1115.1 403.2L1121.6 401.1L1128.1 399.2L1134.8 397.4L1141.5 395.8L1148.3 394.3L1155.2 393.0L1162.1 391.9L1169.1 391.0L1176.1 390.2L1183.2 389.6L1190.2 389.2L1197.3 388.9L1204.5 388.8L1211.6 388.9L1218.7 389.2L1225.8 389.6L1232.9 390.2L1239.9 391.0L1246.9 391.9L1253.9 393.0L1260.8 394.3L1267.6 395.8L1274.4 397.4L1281.1 399.2L1287.7 401.1L1294.2 403.2L1300.6 405.5L1306.9 407.9L1313.1 410.5L1319.2 413.2L1325.1 416.1L1330.9 419.1L1336.6 422.3L1342.0 425.6L1347.4 429.0L1352.5 432.6L1357.5 436.3L1362.3 440.1L1367.0 444.0L1371.4 448.1L1375.6 452.3L1379.7 456.5L1383.5 460.9L1387.1 465.4L1390.5 469.9L1393.6 474.6L1396.5 479.3L1399.2 484.1L1401.7 488.9L1403.9 493.9L1405.8 498.9L1407.5 503.9L1409.0 509.0L1410.2 514.1L1411.1 519.2L1411.8 524.4L1412.2 529.6L1412.3 534.8Z" fill="#7b7b7b" stroke="#7b7b7b" stroke-width=".3"/>
<path d="M1403.8 534.8L1403.7 529.8L1403.3 524.8L1402.7 519.9L1401.8 514.9L1400.7 510.0L1399.3 505.1L1397.7 500.3L1395.8 495.5L1393.8 490.8L1391.4 486.1L1388.9 481.5L1386.1 476.9L1383.1 472.5L1379.8 468.1L1376.4 463.8L1372.7 459.6L1368.9 455.5L1364.8 451.5L1360.6 447.6L1356.2 443.8L1351.6 440.1L1346.8 436.6L1341.8 433.1L1336.7 429.8L1331.4 426.6L1326.0 423.6L1320.5 420.7L1314.8 417.9L1309.0 415.3L1303.0 412.8L1297.0 410.5L1290.8 408.3L1284.5 406.2L1278.2 404.4L1271.8 402.6L1265.3 401.1L1258.7 399.7L1252.0 398.4L1245.3 397.4L1238.6 396.5L1231.8 395.7L1225.0 395.1L1218.2 394.7L1211.4 394.5L1204.5 394.4L1197.7 394.5L1190.9 394.7L1184.1 395.1L1177.3 395.7L1170.5 396.5L1163.8 397.4L1157.2 398.4L1150.6 399.7L1144.0 401.1L1137.6 402.6L1131.2 404.4L1124.9 406.2L1118.7 408.3L1112.6 410.5L1106.6 412.8L1100.7 415.3L1095.0 417.9L1089.4 420.7L1083.9 423.6L1078.6 426.6L1073.4 429.8L1068.4 433.1L1063.5 436.6L1058.9 440.1L1054.4 443.8L1050.1 447.6L1045.9 451.5L1042.0 455.5L1038.3 459.6L1034.7 463.8L1031.4 468.1L1028.3 472.5L1025.5 476.9L1022.8 481.5L1020.4 486.1L1018.2 490.8L1016.2 495.5L1014.5 500.3L1013.1 505.1L1011.8 510.0L1010.9 514.9L1010.1 519.9L1009.7 524.8L1009.4 529.8L1009.5 534.8L1009.6 537.9L1009.6 532.9L1009.8 527.9L1010.2 522.9L1011.0 518.0L1011.9 513.1L1013.2 508.2L1014.6 503.3L1016.3 498.6L1018.3 493.8L1020.5 489.1L1022.9 484.5L1025.6 480.0L1028.4 475.5L1031.5 471.1L1034.8 466.8L1038.4 462.6L1042.1 458.5L1046.0 454.5L1050.1 450.6L1054.4 446.8L1058.9 443.2L1063.6 439.6L1068.5 436.2L1073.5 432.9L1078.6 429.7L1084.0 426.6L1089.4 423.7L1095.0 421.0L1100.8 418.3L1106.6 415.8L1112.6 413.5L1118.7 411.3L1124.9 409.3L1131.2 407.4L1137.6 405.7L1144.0 404.1L1150.6 402.7L1157.2 401.5L1163.8 400.4L1170.5 399.5L1177.3 398.8L1184.0 398.2L1190.8 397.8L1197.7 397.5L1204.5 397.4L1211.3 397.5L1218.2 397.8L1225.0 398.2L1231.8 398.8L1238.5 399.5L1245.3 400.4L1252.0 401.5L1258.6 402.7L1265.2 404.1L1271.7 405.7L1278.1 407.4L1284.4 409.3L1290.7 411.3L1296.8 413.5L1302.9 415.8L1308.8 418.3L1314.6 421.0L1320.3 423.7L1325.9 426.6L1331.3 429.7L1336.6 432.9L1341.7 436.2L1346.6 439.6L1351.4 443.2L1356.0 446.8L1360.4 450.6L1364.7 454.5L1368.7 458.5L1372.6 462.6L1376.2 466.8L1379.7 471.1L1382.9 475.5L1385.9 480.0L1388.7 484.5L1391.2 489.1L1393.6 493.8L1395.6 498.6L1397.5 503.3L1399.1 508.2L1400.5 513.1L1401.6 518.0L1402.5 522.9L1403.1 527.9L1403.5 532.9L1403.6 537.9Z" fill="#7b7b7b" stroke="#7b7b7b" stroke-width=".3"/>
<path d="M1394.5 537.9L1394.4 533.1L1394.1 528.3L1393.5 523.6L1392.7 518.9L1391.6 514.2L1390.4 509.5L1388.8 504.9L1387.1 500.3L1385.1 495.8L1382.9 491.3L1380.5 486.9L1377.9 482.5L1375.0 478.2L1371.9 474.1L1368.7 469.9L1365.2 465.9L1361.5 462.0L1357.7 458.1L1353.6 454.4L1349.4 450.8L1345.0 447.2L1340.5 443.8L1335.8 440.5L1330.9 437.4L1325.9 434.3L1320.7 431.4L1315.4 428.6L1309.9 425.9L1304.4 423.4L1298.7 421.0L1292.9 418.8L1287.0 416.7L1281.1 414.8L1275.0 413.0L1268.9 411.3L1262.6 409.8L1256.3 408.5L1250.0 407.3L1243.6 406.2L1237.2 405.4L1230.7 404.6L1224.2 404.1L1217.7 403.7L1211.1 403.4L1204.6 403.4L1198.0 403.4L1191.5 403.7L1185.0 404.1L1178.5 404.6L1172.1 405.4L1165.7 406.2L1159.3 407.3L1153.0 408.5L1146.7 409.8L1140.6 411.3L1134.5 413.0L1128.4 414.8L1122.5 416.7L1116.7 418.8L1111.0 421.0L1105.4 423.4L1099.9 425.9L1094.5 428.6L1089.3 431.4L1084.2 434.3L1079.3 437.4L1074.5 440.5L1069.9 443.8L1065.4 447.2L1061.1 450.8L1057.0 454.4L1053.1 458.1L1049.4 462.0L1045.8 465.9L1042.5 469.9L1039.3 474.1L1036.4 478.2L1033.7 482.5L1031.1 486.9L1028.9 491.3L1026.8 495.8L1024.9 500.3L1023.3 504.9L1022.0 509.5L1020.8 514.2L1019.9 518.9L1019.2 523.6L1018.8 528.3L1018.6 533.1L1018.7 537.9L1018.8 540.9L1018.8 536.2L1018.9 531.4L1019.4 526.6L1020.0 521.9L1020.9 517.2L1022.1 512.5L1023.4 507.9L1025.1 503.3L1026.9 498.8L1029.0 494.3L1031.2 489.9L1033.8 485.6L1036.5 481.3L1039.4 477.1L1042.6 473.0L1045.9 469.0L1049.5 465.0L1053.2 461.2L1057.1 457.4L1061.2 453.8L1065.5 450.3L1070.0 446.9L1074.6 443.6L1079.4 440.4L1084.3 437.4L1089.4 434.4L1094.6 431.7L1099.9 429.0L1105.4 426.5L1111.0 424.1L1116.7 421.9L1122.5 419.8L1128.5 417.8L1134.5 416.0L1140.6 414.4L1146.7 412.9L1153.0 411.5L1159.3 410.3L1165.6 409.3L1172.0 408.4L1178.5 407.7L1185.0 407.1L1191.5 406.7L1198.0 406.5L1204.5 406.4L1211.1 406.5L1217.6 406.7L1224.1 407.1L1230.6 407.7L1237.1 408.4L1243.5 409.3L1249.9 410.3L1256.3 411.5L1262.5 412.9L1268.8 414.4L1274.9 416.0L1281.0 417.8L1286.9 419.8L1292.8 421.9L1298.6 424.1L1304.3 426.5L1309.8 429.0L1315.2 431.7L1320.5 434.4L1325.7 437.4L1330.7 440.4L1335.6 443.6L1340.3 446.9L1344.9 450.3L1349.3 453.8L1353.5 457.4L1357.5 461.2L1361.4 465.0L1365.0 469.0L1368.5 473.0L1371.8 477.1L1374.8 481.3L1377.7 485.6L1380.3 489.9L1382.7 494.3L1384.9 498.8L1386.9 503.3L1388.7 507.9L1390.2 512.5L1391.4 517.2L1392.5 521.9L1393.3 526.6L1393.9 531.4L1394.2 536.2L1394.3 540.9Z" fill="#7b7b7b" stroke="#7b7b7b" stroke-width=".3"/>
<path d="M1385.8 540.9L1385.7 536.4L1385.5 531.8L1384.9 527.3L1384.2 522.7L1383.2 518.2L1382.0 513.8L1380.6 509.3L1379.0 505.0L1377.1 500.6L1375.0 496.3L1372.7 492.1L1370.2 487.9L1367.5 483.8L1364.6 479.8L1361.5 475.9L1358.2 472.0L1354.7 468.2L1351.0 464.5L1347.2 461.0L1343.1 457.5L1338.9 454.1L1334.6 450.8L1330.1 447.7L1325.4 444.6L1320.6 441.7L1315.7 438.9L1310.6 436.2L1305.4 433.7L1300.1 431.2L1294.7 428.9L1289.2 426.8L1283.5 424.8L1277.8 422.9L1272.0 421.2L1266.1 419.6L1260.2 418.1L1254.2 416.9L1248.1 415.7L1242.0 414.7L1235.8 413.9L1229.6 413.2L1223.4 412.6L1217.1 412.3L1210.9 412.0L1204.6 412.0L1198.4 412.0L1192.1 412.3L1185.9 412.6L1179.7 413.2L1173.5 413.9L1167.4 414.7L1161.3 415.7L1155.2 416.9L1149.3 418.1L1143.3 419.6L1137.5 421.2L1131.8 422.9L1126.1 424.8L1120.5 426.8L1115.1 428.9L1109.7 431.2L1104.5 433.7L1099.3 436.2L1094.4 438.9L1089.5 441.7L1084.8 444.6L1080.2 447.7L1075.8 450.8L1071.6 454.1L1067.5 457.5L1063.5 461.0L1059.8 464.5L1056.2 468.2L1052.9 472.0L1049.7 475.9L1046.7 479.8L1043.9 483.8L1041.3 487.9L1038.9 492.1L1036.7 496.3L1034.8 500.6L1033.1 505.0L1031.5 509.3L1030.2 513.8L1029.2 518.2L1028.3 522.7L1027.7 527.3L1027.3 531.8L1027.2 536.4L1027.3 540.9L1027.4 544.0L1027.3 539.4L1027.4 534.9L1027.8 530.3L1028.4 525.8L1029.3 521.3L1030.3 516.8L1031.6 512.4L1033.2 508.0L1034.9 503.7L1036.8 499.4L1039.0 495.1L1041.4 491.0L1044.0 486.9L1046.8 482.9L1049.8 478.9L1052.9 475.1L1056.3 471.3L1059.9 467.6L1063.6 464.0L1067.5 460.5L1071.6 457.1L1075.9 453.9L1080.3 450.7L1084.8 447.7L1089.5 444.7L1094.4 441.9L1099.4 439.3L1104.5 436.7L1109.7 434.3L1115.1 432.0L1120.5 429.8L1126.1 427.8L1131.8 426.0L1137.5 424.2L1143.3 422.6L1149.3 421.2L1155.2 419.9L1161.3 418.8L1167.3 417.8L1173.5 416.9L1179.7 416.2L1185.9 415.7L1192.1 415.3L1198.3 415.1L1204.6 415.0L1210.8 415.1L1217.1 415.3L1223.3 415.7L1229.5 416.2L1235.7 416.9L1241.9 417.8L1248.0 418.8L1254.1 419.9L1260.1 421.2L1266.0 422.6L1271.9 424.2L1277.7 426.0L1283.4 427.8L1289.1 429.8L1294.6 432.0L1300.0 434.3L1305.3 436.7L1310.5 439.3L1315.6 441.9L1320.5 444.7L1325.3 447.7L1329.9 450.7L1334.4 453.9L1338.8 457.1L1343.0 460.5L1347.0 464.0L1350.8 467.6L1354.5 471.3L1358.0 475.1L1361.3 478.9L1364.4 482.9L1367.3 486.9L1370.0 491.0L1372.5 495.1L1374.8 499.4L1376.9 503.7L1378.8 508.0L1380.4 512.4L1381.8 516.8L1383.0 521.3L1384.0 525.8L1384.8 530.3L1385.3 534.9L1385.5 539.4L1385.6 544.0Z" fill="#7b7b7b" stroke="#7b7b7b" stroke-width=".3"/>
<path d="M1376.8 544.0L1376.8 539.6L1376.6 535.3L1376.1 531.0L1375.4 526.6L1374.5 522.3L1373.4 518.1L1372.1 513.9L1370.5 509.7L1368.8 505.5L1366.8 501.4L1364.6 497.4L1362.3 493.4L1359.7 489.5L1357.0 485.7L1354.0 481.9L1350.9 478.2L1347.6 474.6L1344.1 471.1L1340.4 467.7L1336.6 464.3L1332.6 461.1L1328.5 458.0L1324.2 454.9L1319.8 452.0L1315.2 449.2L1310.5 446.5L1305.7 444.0L1300.8 441.5L1295.7 439.2L1290.5 437.0L1285.3 435.0L1279.9 433.0L1274.5 431.2L1268.9 429.6L1263.3 428.1L1257.6 426.7L1251.9 425.5L1246.1 424.4L1240.3 423.4L1234.4 422.6L1228.5 421.9L1222.6 421.4L1216.6 421.1L1210.6 420.8L1204.7 420.8L1198.7 420.8L1192.7 421.1L1186.8 421.4L1180.9 421.9L1175.0 422.6L1169.1 423.4L1163.3 424.4L1157.6 425.5L1151.9 426.7L1146.2 428.1L1140.7 429.6L1135.2 431.2L1129.8 433.0L1124.5 435.0L1119.3 437.0L1114.2 439.2L1109.2 441.5L1104.3 444.0L1099.6 446.5L1094.9 449.2L1090.5 452.0L1086.1 454.9L1081.9 458.0L1077.9 461.1L1074.0 464.3L1070.3 467.7L1066.7 471.1L1063.3 474.6L1060.1 478.2L1057.1 481.9L1054.3 485.7L1051.7 489.5L1049.2 493.4L1047.0 497.4L1044.9 501.4L1043.1 505.5L1041.4 509.7L1040.0 513.9L1038.8 518.1L1037.8 522.3L1037.0 526.6L1036.5 531.0L1036.2 535.3L1036.0 539.6L1036.2 544.0L1036.3 547.0L1036.1 542.7L1036.2 538.3L1036.6 534.0L1037.1 529.7L1037.9 525.4L1038.9 521.1L1040.1 516.9L1041.5 512.7L1043.2 508.6L1045.0 504.5L1047.0 500.4L1049.3 496.5L1051.7 492.6L1054.4 488.7L1057.2 484.9L1060.2 481.3L1063.4 477.6L1066.8 474.1L1070.3 470.7L1074.1 467.4L1077.9 464.1L1082.0 461.0L1086.2 458.0L1090.5 455.1L1095.0 452.3L1099.6 449.6L1104.4 447.0L1109.2 444.6L1114.2 442.3L1119.3 440.1L1124.5 438.0L1129.8 436.1L1135.2 434.3L1140.7 432.6L1146.2 431.1L1151.9 429.7L1157.6 428.5L1163.3 427.4L1169.1 426.4L1175.0 425.6L1180.9 425.0L1186.8 424.5L1192.7 424.1L1198.7 423.9L1204.6 423.8L1210.6 423.9L1216.6 424.1L1222.5 424.5L1228.4 425.0L1234.3 425.6L1240.2 426.4L1246.0 427.4L1251.8 428.5L1257.6 429.7L1263.2 431.1L1268.8 432.6L1274.4 434.3L1279.8 436.1L1285.2 438.0L1290.4 440.1L1295.6 442.3L1300.6 444.6L1305.6 447.0L1310.4 449.6L1315.1 452.3L1319.7 455.1L1324.1 458.0L1328.4 461.0L1332.5 464.1L1336.5 467.4L1340.3 470.7L1343.9 474.1L1347.4 477.6L1350.7 481.3L1353.9 484.9L1356.8 488.7L1359.5 492.6L1362.1 496.5L1364.5 500.4L1366.6 504.5L1368.6 508.6L1370.4 512.7L1371.9 516.9L1373.2 521.1L1374.3 525.4L1375.2 529.7L1375.9 534.0L1376.4 538.3L1376.6 542.7L1376.6 547.0Z" fill="#7b7b7b" stroke="#7b7b7b" stroke-width=".3"/>
<path d="M1366.9 547.0L1366.9 542.9L1366.7 538.8L1366.3 534.7L1365.7 530.6L1364.9 526.6L1363.8 522.5L1362.6 518.5L1361.2 514.6L1359.5 510.7L1357.7 506.8L1355.7 503.0L1353.5 499.2L1351.1 495.5L1348.5 491.8L1345.7 488.3L1342.8 484.8L1339.7 481.4L1336.4 478.0L1333.0 474.8L1329.4 471.6L1325.6 468.5L1321.7 465.6L1317.7 462.7L1313.5 459.9L1309.2 457.3L1304.8 454.7L1300.2 452.3L1295.6 450.0L1290.8 447.8L1285.9 445.7L1280.9 443.7L1275.9 441.9L1270.7 440.2L1265.5 438.6L1260.2 437.2L1254.8 435.9L1249.4 434.7L1243.9 433.7L1238.4 432.8L1232.8 432.0L1227.3 431.4L1221.6 430.9L1216.0 430.5L1210.4 430.3L1204.7 430.2L1199.1 430.3L1193.4 430.5L1187.8 430.9L1182.2 431.4L1176.6 432.0L1171.1 432.8L1165.6 433.7L1160.2 434.7L1154.8 435.9L1149.5 437.2L1144.2 438.6L1139.0 440.2L1133.9 441.9L1128.9 443.7L1124.0 445.7L1119.2 447.8L1114.5 450.0L1109.9 452.3L1105.4 454.7L1101.0 457.3L1096.8 459.9L1092.7 462.7L1088.8 465.6L1084.9 468.5L1081.3 471.6L1077.8 474.8L1074.4 478.0L1071.3 481.4L1068.3 484.8L1065.4 488.3L1062.8 491.8L1060.3 495.5L1058.0 499.2L1055.9 503.0L1054.0 506.8L1052.3 510.7L1050.8 514.6L1049.4 518.5L1048.3 522.5L1047.4 526.6L1046.7 530.6L1046.2 534.7L1045.9 538.8L1045.9 542.9L1046.0 547.0L1046.2 553.2L1046.0 549.0L1046.1 544.9L1046.4 540.8L1046.9 536.8L1047.6 532.7L1048.5 528.7L1049.6 524.7L1050.9 520.7L1052.4 516.8L1054.2 512.9L1056.1 509.1L1058.2 505.3L1060.4 501.6L1062.9 498.0L1065.6 494.4L1068.4 490.9L1071.4 487.5L1074.6 484.1L1077.9 480.9L1081.4 477.7L1085.1 474.7L1088.9 471.7L1092.8 468.8L1096.9 466.1L1101.1 463.4L1105.5 460.8L1109.9 458.4L1114.5 456.1L1119.2 453.9L1124.0 451.8L1128.9 449.9L1134.0 448.0L1139.0 446.3L1144.2 444.7L1149.5 443.3L1154.8 442.0L1160.2 440.8L1165.6 439.8L1171.1 438.9L1176.6 438.1L1182.2 437.5L1187.8 437.0L1193.4 436.6L1199.0 436.4L1204.6 436.4L1210.3 436.4L1215.9 436.6L1221.5 437.0L1227.1 437.5L1232.7 438.1L1238.3 438.9L1243.8 439.8L1249.2 440.8L1254.7 442.0L1260.0 443.3L1265.3 444.7L1270.5 446.3L1275.7 448.0L1280.7 449.9L1285.7 451.8L1290.6 453.9L1295.3 456.1L1300.0 458.4L1304.5 460.8L1309.0 463.4L1313.3 466.1L1317.4 468.8L1321.5 471.7L1325.3 474.7L1329.1 477.7L1332.7 480.9L1336.1 484.1L1339.4 487.5L1342.5 490.9L1345.4 494.4L1348.2 498.0L1350.8 501.6L1353.1 505.3L1355.4 509.1L1357.4 512.9L1359.2 516.8L1360.8 520.7L1362.3 524.7L1363.5 528.7L1364.5 532.7L1365.3 536.8L1365.9 540.8L1366.3 544.9L1366.5 549.0L1366.5 553.2Z" fill="#7b7b7b" stroke="#7b7b7b" stroke-width=".3"/>
<path d="M1505.0 401.4L1498.4 392.2L1497.7 397.0L1504.2 406.2Z" fill="#ffffff" stroke="#fff" stroke-width=".8"/><path d="M1495.5 407.1L1489.0 397.9L1488.3 402.8L1494.8 412.0Z" fill="#ffffff" stroke="#fff" stroke-width=".8"/><path d="M1486.5 412.8L1480.0 403.6L1479.3 408.4L1485.7 417.6Z" fill="#ffffff" stroke="#fff" stroke-width=".8"/><path d="M1478.4 418.2L1472.0 408.9L1471.2 413.8L1477.7 423.0Z" fill="#ffffff" stroke="#fff" stroke-width=".8"/><path d="M1469.4 423.8L1463.0 414.6L1462.3 419.4L1468.7 428.6Z" fill="#ffffff" stroke="#fff" stroke-width=".8"/><path d="M1461.5 429.2L1455.1 419.9L1454.4 424.7L1460.8 434.0Z" fill="#ffffff" stroke="#fff" stroke-width=".8"/><path d="M1453.5 434.5L1447.1 425.2L1446.4 430.1L1452.8 439.3Z" fill="#ffffff" stroke="#fff" stroke-width=".8"/><path d="M1446.0 439.7L1439.6 430.5L1438.9 435.3L1445.3 444.5Z" fill="#ffffff" stroke="#fff" stroke-width=".8"/><path d="M1437.7 445.2L1431.4 435.9L1430.4 445.6L1436.7 454.8Z" fill="#ffffff" stroke="#fff" stroke-width=".8"/><path d="M1508.9 401.1L1502.3 391.8L1497.9 393.1L1504.4 402.3ZM1499.5 406.9L1492.9 397.5L1488.5 398.9L1495.0 408.1ZM1490.4 412.5L1483.8 403.2L1479.4 404.5L1485.9 413.7ZM1482.4 417.9L1475.8 408.5L1471.4 409.9L1477.8 419.1ZM1473.3 423.6L1466.8 414.2L1462.4 415.5L1468.8 424.8ZM1465.5 428.9L1458.9 419.5L1454.5 420.9L1460.9 430.1ZM1457.5 434.2L1451.0 424.8L1446.6 426.2L1452.9 435.5ZM1449.9 439.5L1443.5 430.0L1439.1 431.4L1445.4 440.7ZM1441.7 444.9L1435.2 435.4L1430.8 436.8L1437.2 446.1Z" stroke="#8a8a8a" stroke-width=".8" fill="#fff"/><path d="M1432.2 331.1L1421.5 324.4L1420.9 329.3L1431.6 336.0Z" fill="#ffffff" stroke="#fff" stroke-width=".8"/><path d="M1425.3 338.9L1414.6 332.2L1414.0 337.1L1424.7 343.8Z" fill="#ffffff" stroke="#fff" stroke-width=".8"/><path d="M1418.6 346.6L1407.9 339.8L1407.4 344.7L1418.1 351.5Z" fill="#ffffff" stroke="#fff" stroke-width=".8"/><path d="M1412.7 353.7L1402.0 346.9L1401.5 351.8L1412.2 358.6Z" fill="#ffffff" stroke="#fff" stroke-width=".8"/><path d="M1406.1 361.4L1395.4 354.5L1394.9 359.4L1405.5 366.2Z" fill="#ffffff" stroke="#fff" stroke-width=".8"/><path d="M1400.3 368.4L1389.6 361.6L1389.1 366.5L1399.7 373.3Z" fill="#ffffff" stroke="#fff" stroke-width=".8"/><path d="M1394.4 375.6L1383.7 368.7L1383.2 373.6L1393.8 380.4Z" fill="#ffffff" stroke="#fff" stroke-width=".8"/><path d="M1388.8 382.4L1378.2 375.6L1377.7 380.4L1388.3 387.3Z" fill="#ffffff" stroke="#fff" stroke-width=".8"/><path d="M1382.8 389.7L1372.1 382.8L1371.3 392.5L1381.9 399.4Z" fill="#ffffff" stroke="#fff" stroke-width=".8"/><path d="M1435.1 330.0L1424.2 323.1L1421.1 325.4L1431.8 332.2ZM1428.2 337.8L1417.3 330.9L1414.2 333.2L1424.9 340.0ZM1421.6 345.4L1410.7 338.5L1407.5 340.9L1418.2 347.6ZM1415.6 352.5L1404.8 345.6L1401.6 348.0L1412.3 354.8ZM1409.0 360.2L1398.2 353.2L1395.0 355.6L1405.7 362.4ZM1403.2 367.2L1392.4 360.3L1389.2 362.7L1399.9 369.5ZM1397.3 374.4L1386.5 367.4L1383.3 369.8L1394.0 376.6ZM1391.8 381.2L1381.0 374.2L1377.8 376.6L1388.4 383.5ZM1385.7 388.5L1374.9 381.5L1371.7 383.9L1382.3 390.8Z" stroke="#8a8a8a" stroke-width=".8" fill="#fff"/><path d="M1329.4 284.9L1316.1 281.3L1315.8 286.3L1329.1 289.8Z" fill="#ffffff" stroke="#fff" stroke-width=".8"/><path d="M1325.8 294.0L1312.5 290.4L1312.2 295.4L1325.5 298.9Z" fill="#ffffff" stroke="#fff" stroke-width=".8"/><path d="M1322.3 302.9L1309.0 299.3L1308.7 304.2L1322.0 307.8Z" fill="#ffffff" stroke="#fff" stroke-width=".8"/><path d="M1319.2 311.1L1305.9 307.5L1305.6 312.4L1318.9 316.0Z" fill="#ffffff" stroke="#fff" stroke-width=".8"/><path d="M1315.8 320.0L1302.4 316.4L1302.1 321.3L1315.4 324.9Z" fill="#ffffff" stroke="#fff" stroke-width=".8"/><path d="M1312.7 328.1L1299.4 324.5L1299.1 329.4L1312.4 333.1Z" fill="#ffffff" stroke="#fff" stroke-width=".8"/><path d="M1309.6 336.4L1296.3 332.7L1296.0 337.7L1309.3 341.3Z" fill="#ffffff" stroke="#fff" stroke-width=".8"/><path d="M1306.7 344.3L1293.4 340.7L1293.1 345.6L1306.4 349.2Z" fill="#ffffff" stroke="#fff" stroke-width=".8"/><path d="M1303.5 352.7L1290.2 349.1L1289.7 358.9L1303.0 362.5Z" fill="#ffffff" stroke="#fff" stroke-width=".8"/><path d="M1331.0 283.2L1317.5 279.5L1315.9 282.5L1329.2 286.0ZM1327.4 292.2L1313.9 288.6L1312.3 291.6L1325.6 295.1ZM1323.9 301.1L1310.4 297.5L1308.8 300.4L1322.1 304.0ZM1320.8 309.3L1307.3 305.7L1305.7 308.6L1319.0 312.2ZM1317.4 318.2L1303.8 314.5L1302.2 317.5L1315.5 321.1ZM1314.3 326.4L1300.8 322.7L1299.2 325.7L1312.5 329.3ZM1311.2 334.6L1297.7 330.9L1296.1 333.9L1309.4 337.5ZM1308.3 342.5L1294.8 338.8L1293.2 341.8L1306.5 345.4ZM1305.1 350.9L1291.6 347.2L1290.0 350.2L1303.3 353.9Z" stroke="#8a8a8a" stroke-width=".8" fill="#fff"/><path d="M1211.0 267.7L1196.9 267.7L1196.8 272.7L1210.9 272.7Z" fill="#ffffff" stroke="#fff" stroke-width=".8"/><path d="M1211.1 277.2L1196.9 277.2L1196.9 282.2L1211.0 282.2Z" fill="#ffffff" stroke="#fff" stroke-width=".8"/><path d="M1211.1 286.5L1197.0 286.5L1196.9 291.5L1211.1 291.5Z" fill="#ffffff" stroke="#fff" stroke-width=".8"/><path d="M1211.2 295.1L1197.0 295.1L1197.0 300.1L1211.1 300.1Z" fill="#ffffff" stroke="#fff" stroke-width=".8"/><path d="M1211.2 304.4L1197.0 304.4L1197.0 309.4L1211.2 309.4Z" fill="#ffffff" stroke="#fff" stroke-width=".8"/><path d="M1211.3 313.0L1197.1 313.0L1197.0 317.9L1211.2 317.9Z" fill="#ffffff" stroke="#fff" stroke-width=".8"/><path d="M1211.3 321.6L1197.1 321.6L1197.1 326.5L1211.3 326.5Z" fill="#ffffff" stroke="#fff" stroke-width=".8"/><path d="M1211.4 329.8L1197.1 329.8L1197.1 334.8L1211.3 334.8Z" fill="#ffffff" stroke="#fff" stroke-width=".8"/><path d="M1211.4 338.7L1197.2 338.7L1197.1 348.5L1211.3 348.5Z" fill="#ffffff" stroke="#fff" stroke-width=".8"/><path d="M1210.9 271.8L1196.8 271.8M1211.0 281.3L1196.9 281.3M1211.1 290.6L1196.9 290.6M1211.1 299.2L1197.0 299.2M1211.2 308.5L1197.0 308.5M1211.2 317.0L1197.0 317.0M1211.3 325.6L1197.1 325.6M1211.3 333.8L1197.1 333.8M1211.3 347.5L1197.1 347.5" stroke="#a0a0a0" stroke-width=".9" fill="none"/><path d="M1211.0 265.8L1196.7 265.8M1211.1 275.3L1196.8 275.3M1211.2 284.5L1196.8 284.5M1211.2 293.1L1196.8 293.1M1211.3 302.4L1196.9 302.4M1211.3 310.9L1196.9 310.9M1211.4 319.5L1196.9 319.5M1211.4 327.8L1197.0 327.8M1211.5 336.6L1197.0 336.6" stroke="#7e7e7e" stroke-width="1.500" fill="none"/><path d="M1092.2 281.3L1079.0 284.9L1079.2 289.8L1092.4 286.3Z" fill="#ffffff" stroke="#fff" stroke-width=".8"/><path d="M1095.9 290.4L1082.7 294.0L1082.9 298.9L1096.1 295.4Z" fill="#ffffff" stroke="#fff" stroke-width=".8"/><path d="M1099.5 299.3L1086.2 302.9L1086.5 307.8L1099.6 304.2Z" fill="#ffffff" stroke="#fff" stroke-width=".8"/><path d="M1102.6 307.5L1089.4 311.1L1089.6 316.0L1102.8 312.4Z" fill="#ffffff" stroke="#fff" stroke-width=".8"/><path d="M1106.2 316.4L1093.0 320.0L1093.2 324.9L1106.4 321.3Z" fill="#ffffff" stroke="#fff" stroke-width=".8"/><path d="M1109.3 324.5L1096.1 328.1L1096.3 333.1L1109.5 329.4Z" fill="#ffffff" stroke="#fff" stroke-width=".8"/><path d="M1112.5 332.7L1099.2 336.4L1099.5 341.3L1112.7 337.7Z" fill="#ffffff" stroke="#fff" stroke-width=".8"/><path d="M1115.5 340.7L1102.2 344.3L1102.4 349.2L1115.6 345.6Z" fill="#ffffff" stroke="#fff" stroke-width=".8"/><path d="M1118.7 349.1L1105.5 352.7L1105.8 362.5L1118.9 358.9Z" fill="#ffffff" stroke="#fff" stroke-width=".8"/><path d="M1090.7 279.5L1077.3 283.2L1079.2 286.0L1092.4 282.5ZM1094.4 288.6L1081.0 292.2L1082.9 295.1L1096.1 291.6ZM1098.0 297.5L1084.6 301.1L1086.5 304.0L1099.7 300.4ZM1101.1 305.7L1087.7 309.3L1089.6 312.2L1102.8 308.6ZM1104.7 314.5L1091.3 318.2L1093.2 321.1L1106.4 317.5ZM1107.8 322.7L1094.4 326.4L1096.3 329.3L1109.5 325.7ZM1111.0 330.9L1097.5 334.6L1099.5 337.5L1112.7 333.9ZM1114.0 338.8L1100.5 342.5L1102.4 345.4L1115.7 341.8ZM1117.3 347.2L1103.8 350.9L1105.7 353.9L1118.9 350.2Z" stroke="#8a8a8a" stroke-width=".8" fill="#fff"/><path d="M988.1 324.4L977.6 331.1L978.1 336.0L988.6 329.3Z" fill="#ffffff" stroke="#fff" stroke-width=".8"/><path d="M995.1 332.2L984.6 338.9L985.0 343.8L995.5 337.1Z" fill="#ffffff" stroke="#fff" stroke-width=".8"/><path d="M1001.8 339.8L991.3 346.6L991.7 351.5L1002.2 344.7Z" fill="#ffffff" stroke="#fff" stroke-width=".8"/><path d="M1007.7 346.9L997.2 353.7L997.7 358.6L1008.1 351.8Z" fill="#ffffff" stroke="#fff" stroke-width=".8"/><path d="M1014.4 354.5L1003.9 361.4L1004.3 366.2L1014.8 359.4Z" fill="#ffffff" stroke="#fff" stroke-width=".8"/><path d="M1020.2 361.6L1009.8 368.4L1010.2 373.3L1020.6 366.5Z" fill="#ffffff" stroke="#fff" stroke-width=".8"/><path d="M1026.1 368.7L1015.7 375.6L1016.1 380.4L1026.5 373.6Z" fill="#ffffff" stroke="#fff" stroke-width=".8"/><path d="M1031.7 375.6L1021.3 382.4L1021.7 387.3L1032.1 380.4Z" fill="#ffffff" stroke="#fff" stroke-width=".8"/><path d="M1037.8 382.8L1027.4 389.7L1028.0 399.4L1038.4 392.5Z" fill="#ffffff" stroke="#fff" stroke-width=".8"/><path d="M985.3 323.1L974.6 330.0L978.0 332.2L988.5 325.4ZM992.2 330.9L981.6 337.8L985.0 340.0L995.5 333.2ZM998.9 338.5L988.3 345.4L991.7 347.6L1002.2 340.9ZM1004.9 345.6L994.2 352.5L997.6 354.8L1008.1 348.0ZM1011.5 353.2L1000.9 360.2L1004.3 362.4L1014.8 355.6ZM1017.4 360.3L1006.7 367.2L1010.2 369.5L1020.6 362.7ZM1023.3 367.4L1012.6 374.4L1016.1 376.6L1026.5 369.8ZM1028.8 374.2L1018.2 381.2L1021.7 383.5L1032.1 376.6ZM1035.0 381.5L1024.3 388.5L1027.8 390.8L1038.2 383.9Z" stroke="#8a8a8a" stroke-width=".8" fill="#fff"/><path d="M913.2 392.2L907.0 401.4L907.6 406.2L913.8 397.0Z" fill="#ffffff" stroke="#fff" stroke-width=".8"/><path d="M922.6 397.9L916.4 407.1L917.0 412.0L923.2 402.8Z" fill="#ffffff" stroke="#fff" stroke-width=".8"/><path d="M931.6 403.6L925.4 412.8L926.1 417.6L932.2 408.4Z" fill="#ffffff" stroke="#fff" stroke-width=".8"/><path d="M939.7 408.9L933.5 418.2L934.1 423.0L940.3 413.8Z" fill="#ffffff" stroke="#fff" stroke-width=".8"/><path d="M948.6 414.6L942.5 423.8L943.1 428.6L949.2 419.4Z" fill="#ffffff" stroke="#fff" stroke-width=".8"/><path d="M956.5 419.9L950.4 429.2L951.0 434.0L957.1 424.7Z" fill="#ffffff" stroke="#fff" stroke-width=".8"/><path d="M964.4 425.2L958.3 434.5L958.9 439.3L965.0 430.1Z" fill="#ffffff" stroke="#fff" stroke-width=".8"/><path d="M971.9 430.5L965.8 439.7L966.4 444.5L972.5 435.3Z" fill="#ffffff" stroke="#fff" stroke-width=".8"/><path d="M980.1 435.9L974.1 445.2L974.9 454.8L980.9 445.6Z" fill="#ffffff" stroke="#fff" stroke-width=".8"/><path d="M909.3 391.8L903.0 401.1L907.5 402.3L913.8 393.1ZM918.7 397.5L912.4 406.9L916.9 408.1L923.2 398.9ZM927.7 403.2L921.5 412.5L926.0 413.7L932.2 404.5ZM935.8 408.5L929.5 417.9L934.0 419.1L940.2 409.9ZM944.7 414.2L938.5 423.6L943.0 424.8L949.2 415.5ZM952.6 419.5L946.4 428.9L950.9 430.1L957.0 420.9ZM960.5 424.8L954.3 434.2L958.9 435.5L965.0 426.2ZM968.0 430.0L961.8 439.5L966.4 440.7L972.5 431.4ZM976.2 435.4L970.1 444.9L974.6 446.1L980.7 436.8Z" stroke="#8a8a8a" stroke-width=".8" fill="#fff"/><path d="M1371.3 405.5L1360.7 398.5L1360.2 403.4L1370.8 410.3Z" fill="#ffffff" stroke="#fff" stroke-width=".8"/><path d="M1364.7 413.1L1354.1 406.1L1353.6 411.0L1364.2 417.9Z" fill="#ffffff" stroke="#fff" stroke-width=".8"/><path d="M1358.2 420.7L1347.6 413.7L1347.1 418.5L1357.7 425.5Z" fill="#ffffff" stroke="#fff" stroke-width=".8"/><path d="M1352.0 428.0L1341.4 421.0L1340.9 425.9L1351.5 432.8Z" fill="#ffffff" stroke="#fff" stroke-width=".8"/><path d="M1346.2 435.1L1335.6 428.1L1335.1 432.9L1345.7 439.9Z" fill="#ffffff" stroke="#fff" stroke-width=".8"/><path d="M1340.0 442.5L1329.4 435.5L1328.9 440.3L1339.5 447.3Z" fill="#ffffff" stroke="#fff" stroke-width=".8"/><path d="M1334.2 449.5L1323.6 442.5L1323.2 447.3L1333.7 454.3Z" fill="#ffffff" stroke="#fff" stroke-width=".8"/><path d="M1328.2 456.7L1317.6 449.7L1317.2 454.5L1327.7 461.5Z" fill="#ffffff" stroke="#fff" stroke-width=".8"/><path d="M1374.3 404.3L1363.4 397.2L1360.3 399.6L1370.9 406.5ZM1367.7 411.8L1356.9 404.8L1353.7 407.2L1364.3 414.1ZM1361.2 419.4L1350.4 412.3L1347.2 414.8L1357.8 421.7ZM1355.0 426.8L1344.2 419.7L1341.0 422.1L1351.6 429.1ZM1349.2 433.9L1338.4 426.7L1335.2 429.2L1345.7 436.2ZM1343.0 441.2L1332.2 434.1L1329.0 436.5L1339.5 443.5ZM1337.2 448.3L1326.4 441.1L1323.2 443.6L1333.8 450.6ZM1331.3 455.5L1320.4 448.3L1317.2 450.8L1327.8 457.8Z" stroke="#8a8a8a" stroke-width=".8" fill="#fff"/><path d="M1211.5 357.3L1197.2 357.3L1197.2 362.2L1211.4 362.2Z" fill="#ffffff" stroke="#fff" stroke-width=".8"/><path d="M1211.5 366.6L1197.3 366.6L1197.2 371.5L1211.5 371.5Z" fill="#ffffff" stroke="#fff" stroke-width=".8"/><path d="M1211.6 375.9L1197.3 375.9L1197.3 380.8L1211.5 380.8Z" fill="#ffffff" stroke="#fff" stroke-width=".8"/><path d="M1211.7 384.9L1197.4 384.9L1197.3 389.8L1211.6 389.8Z" fill="#ffffff" stroke="#fff" stroke-width=".8"/><path d="M1211.7 393.5L1197.4 393.5L1197.4 398.4L1211.6 398.4Z" fill="#ffffff" stroke="#fff" stroke-width=".8"/><path d="M1211.8 402.5L1197.4 402.5L1197.4 407.4L1211.7 407.4Z" fill="#ffffff" stroke="#fff" stroke-width=".8"/><path d="M1211.8 411.1L1197.5 411.1L1197.4 416.0L1211.7 416.0Z" fill="#ffffff" stroke="#fff" stroke-width=".8"/><path d="M1211.9 420.0L1197.5 420.0L1197.5 424.8L1211.8 424.8Z" fill="#ffffff" stroke="#fff" stroke-width=".8"/><path d="M1211.4 361.3L1197.2 361.3M1211.5 370.6L1197.2 370.6M1211.5 379.9L1197.3 379.9M1211.6 388.9L1197.3 388.9M1211.6 397.5L1197.4 397.5M1211.7 406.5L1197.4 406.5M1211.7 415.1L1197.4 415.1M1211.8 423.9L1197.5 423.9" stroke="#a0a0a0" stroke-width=".9" fill="none"/><path d="M1211.6 355.3L1197.0 355.3M1211.6 364.6L1197.1 364.6M1211.7 373.8L1197.1 373.8M1211.7 382.8L1197.2 382.8M1211.8 391.4L1197.2 391.4M1211.9 400.4L1197.2 400.4M1211.9 409.0L1197.2 409.0M1212.0 417.8L1197.3 417.8" stroke="#7e7e7e" stroke-width="1.500" fill="none"/><path d="M1049.3 398.5L1038.9 405.5L1039.3 410.3L1049.7 403.4Z" fill="#ffffff" stroke="#fff" stroke-width=".8"/><path d="M1055.9 406.1L1045.5 413.1L1045.8 417.9L1056.2 411.0Z" fill="#ffffff" stroke="#fff" stroke-width=".8"/><path d="M1062.5 413.7L1052.1 420.7L1052.4 425.5L1062.8 418.5Z" fill="#ffffff" stroke="#fff" stroke-width=".8"/><path d="M1068.7 421.0L1058.3 428.0L1058.7 432.8L1069.0 425.9Z" fill="#ffffff" stroke="#fff" stroke-width=".8"/><path d="M1074.6 428.1L1064.2 435.1L1064.5 439.9L1074.9 432.9Z" fill="#ffffff" stroke="#fff" stroke-width=".8"/><path d="M1080.8 435.5L1070.4 442.5L1070.8 447.3L1081.1 440.3Z" fill="#ffffff" stroke="#fff" stroke-width=".8"/><path d="M1086.6 442.5L1076.2 449.5L1076.6 454.3L1086.9 447.3Z" fill="#ffffff" stroke="#fff" stroke-width=".8"/><path d="M1092.6 449.7L1082.2 456.7L1082.6 461.5L1092.9 454.5Z" fill="#ffffff" stroke="#fff" stroke-width=".8"/><path d="M1046.4 397.2L1035.8 404.3L1039.3 406.5L1049.7 399.6ZM1053.0 404.8L1042.4 411.8L1045.9 414.1L1056.3 407.2ZM1059.6 412.3L1049.0 419.4L1052.5 421.7L1062.8 414.8ZM1065.8 419.7L1055.2 426.8L1058.7 429.1L1069.1 422.1ZM1071.7 426.7L1061.1 433.9L1064.6 436.2L1074.9 429.2ZM1077.9 434.1L1067.3 441.2L1070.8 443.5L1081.2 436.5ZM1083.7 441.1L1073.1 448.3L1076.6 450.6L1087.0 443.6ZM1089.7 448.3L1079.1 455.5L1082.6 457.8L1093.0 450.8Z" stroke="#8a8a8a" stroke-width=".8" fill="#fff"/>
<path d="M843.8 555.5L838.5 492.0L850.5 492.0L849.9 484.4L874.0 484.4L960.7 512.2L969.3 512.2L1046.1 541.1L1046.5 555.5Z" fill="#7b7b7b"/>
<path d="M838.5 492.0L850.5 492.0L849.9 484.4L838.5 484.4Z" fill="#ffffff"/>
<path d="M874.0 484.9L960.7 512.7L960.7 509.4L874.0 481.6Z" fill="#e9e9e9"/>
<path d="M969.3 512.7L1046.1 541.6L1046.1 538.3L969.3 509.4Z" fill="#e9e9e9"/>
<path d="M960.7 512.7L969.3 512.7L969.3 507.2L960.7 507.2Z" fill="#ffffff"/>
<path d="M1569.0 555.5L1576.2 492.0L1564.1 492.0L1565.0 484.4L1540.8 484.4L1453.4 512.2L1444.7 512.2L1367.1 541.1L1366.2 555.5Z" fill="#7b7b7b"/>
<path d="M1576.2 492.0L1564.1 492.0L1565.0 484.4L1576.2 484.4Z" fill="#ffffff"/>
<path d="M1540.8 484.9L1453.4 512.7L1453.4 509.4L1540.8 481.6Z" fill="#e9e9e9"/>
<path d="M1444.7 512.7L1367.1 541.6L1367.1 538.3L1444.7 509.4Z" fill="#e9e9e9"/>
<path d="M1453.4 512.7L1444.7 512.7L1444.7 507.2L1453.4 507.2Z" fill="#ffffff"/>
<path d="M875.6 477.1h4.600M1532.6 477.1h4.600M884.8 480.3h4.600M1523.4 480.3h4.600M894.0 483.5h4.600M1514.2 483.5h4.600M903.2 486.7h4.600M1505.0 486.7h4.600M912.5 490.0h4.600M1495.7 490.0h4.600M921.7 493.2h4.600M1486.5 493.2h4.600M930.6 496.4h4.600M1477.6 496.4h4.600M939.8 499.7h4.600M1468.4 499.7h4.600M949.3 502.9h4.600M1458.9 502.9h4.600M970.1 507.3h4.600M1438.1 507.3h4.600M979.0 510.5h4.600M1429.2 510.5h4.600M988.0 513.7h4.600M1420.2 513.7h4.600M997.2 516.9h4.600M1411.0 516.9h4.600M1006.4 520.2h4.600M1401.8 520.2h4.600M1015.0 523.3h4.600M1393.2 523.3h4.600M1024.3 526.5h4.600M1383.9 526.5h4.600M1033.1 529.7h4.600M1375.1 529.7h4.600M1042.1 532.9h4.600M1366.1 532.9h4.600" stroke="#8c8c8c" stroke-width="1.300" fill="none"/><rect x="953.500" y="497.800" width="4.200" height="5" fill="#808080"/><rect x="1455.1" y="497.800" width="4.200" height="5" fill="#808080"/>
<defs><linearGradient id="cg" x1="0" x2="1" y1="0" y2="0"><stop offset="0" stop-color="#747474"/><stop offset=".4" stop-color="#8e8e8e"/><stop offset="1" stop-color="#6c6c6c"/></linearGradient></defs>
<path d="M1205.1 216.7L1203.8 250.3A5.7 3.5 0 0 0 1215.2 250.3L1214.9 216.7Z" fill="url(#cg)"/><ellipse cx="1210.0" cy="216.7" rx="4.9" ry="3.2" fill="#fff"/>
<path d="M1191.6 216.7L1190.4 250.3A5.7 3.5 0 0 0 1201.8 250.3L1201.4 216.7Z" fill="url(#cg)"/><ellipse cx="1196.5" cy="216.7" rx="4.9" ry="3.2" fill="#fff"/>
<path d="M1244.8 218.6L1243.2 252.2A5.7 3.5 0 0 0 1254.6 252.2L1254.6 218.6Z" fill="url(#cg)"/><ellipse cx="1249.7" cy="218.6" rx="4.9" ry="3.2" fill="#fff"/>
<path d="M1151.9 218.8L1151.1 252.4A5.7 3.5 0 0 0 1162.5 252.4L1161.7 218.8Z" fill="url(#cg)"/><ellipse cx="1156.8" cy="218.8" rx="4.9" ry="3.2" fill="#fff"/>
<path d="M1282.4 223.3L1280.5 257.0A5.7 3.5 0 0 0 1291.9 257.0L1292.2 223.3Z" fill="url(#cg)"/><ellipse cx="1287.3" cy="223.3" rx="4.9" ry="3.2" fill="#fff"/>
<path d="M1113.9 223.7L1113.4 257.3A5.7 3.5 0 0 0 1124.8 257.3L1123.8 223.7Z" fill="url(#cg)"/><ellipse cx="1118.8" cy="223.7" rx="4.9" ry="3.2" fill="#fff"/>
<path d="M1320.8 231.2L1318.6 264.8A5.7 3.5 0 0 0 1330.0 264.8L1330.6 231.2Z" fill="url(#cg)"/><ellipse cx="1325.7" cy="231.2" rx="4.9" ry="3.2" fill="#fff"/>
<path d="M1075.8 231.7L1075.6 265.4A5.7 3.5 0 0 0 1087.1 265.4L1085.7 231.7Z" fill="url(#cg)"/><ellipse cx="1080.7" cy="231.7" rx="4.9" ry="3.2" fill="#fff"/>
<path d="M1335.7 235.1L1333.3 268.7A5.7 3.5 0 0 0 1344.8 268.7L1345.6 235.1Z" fill="url(#cg)"/><ellipse cx="1340.6" cy="235.1" rx="4.9" ry="3.2" fill="#fff"/>
<path d="M1061.6 235.5L1061.5 269.2A5.7 3.5 0 0 0 1073.0 269.2L1071.5 235.5Z" fill="url(#cg)"/><ellipse cx="1066.5" cy="235.5" rx="4.9" ry="3.2" fill="#fff"/>
<path d="M1372.1 247.0L1369.4 280.6A5.7 3.6 0 0 0 1380.9 280.6L1382.0 247.0Z" fill="url(#cg)"/><ellipse cx="1377.0" cy="247.0" rx="4.9" ry="3.3" fill="#fff"/>
<path d="M1025.6 247.5L1025.9 281.2A5.7 3.6 0 0 0 1037.4 281.2L1035.5 247.5Z" fill="url(#cg)"/><ellipse cx="1030.6" cy="247.5" rx="4.9" ry="3.3" fill="#fff"/>
<path d="M1405.5 261.1L1402.5 294.8A5.8 3.6 0 0 0 1414.1 294.8L1415.5 261.1Z" fill="url(#cg)"/><ellipse cx="1410.5" cy="261.1" rx="5.0" ry="3.3" fill="#fff"/>
<path d="M993.7 261.4L994.2 295.1A5.8 3.6 0 0 0 1005.7 295.1L1003.6 261.4Z" fill="url(#cg)"/><ellipse cx="998.6" cy="261.4" rx="5.0" ry="3.3" fill="#fff"/>
<path d="M1437.2 278.1L1433.9 311.8A5.8 3.6 0 0 0 1445.5 311.8L1447.1 278.1Z" fill="url(#cg)"/><ellipse cx="1442.1" cy="278.1" rx="5.0" ry="3.3" fill="#fff"/>
<path d="M962.1 278.6L962.9 312.3A5.8 3.6 0 0 0 974.5 312.3L972.1 278.6Z" fill="url(#cg)"/><ellipse cx="967.1" cy="278.6" rx="5.0" ry="3.3" fill="#fff"/>
<path d="M1447.8 284.7L1444.5 318.4A5.8 3.6 0 0 0 1456.1 318.4L1457.8 284.7Z" fill="url(#cg)"/><ellipse cx="1452.8" cy="284.7" rx="5.0" ry="3.3" fill="#fff"/>
<path d="M951.2 285.6L952.1 319.3A5.8 3.6 0 0 0 963.7 319.3L961.2 285.6Z" fill="url(#cg)"/><ellipse cx="956.2" cy="285.6" rx="5.0" ry="3.3" fill="#fff"/>
<path d="M1476.1 305.2L1472.4 338.9A5.8 3.6 0 0 0 1484.1 338.9L1486.1 305.2Z" fill="url(#cg)"/><ellipse cx="1481.1" cy="305.2" rx="5.0" ry="3.3" fill="#fff"/>
<path d="M924.5 305.5L925.6 339.2A5.8 3.6 0 0 0 937.3 339.2L934.6 305.5Z" fill="url(#cg)"/><ellipse cx="929.5" cy="305.5" rx="5.0" ry="3.3" fill="#fff"/>
<path d="M1499.9 326.8L1496.0 360.5A5.9 3.6 0 0 0 1507.8 360.5L1510.0 326.8Z" fill="url(#cg)"/><ellipse cx="1504.9" cy="326.8" rx="5.1" ry="3.3" fill="#fff"/>
<path d="M900.4 328.2L901.7 361.9A5.9 3.6 0 0 0 913.4 361.9L910.5 328.2Z" fill="url(#cg)"/><ellipse cx="905.4" cy="328.2" rx="5.1" ry="3.3" fill="#fff"/>
<path d="M1521.1 351.3L1517.1 385.1A5.9 3.7 0 0 0 1528.9 385.1L1531.3 351.3Z" fill="url(#cg)"/><ellipse cx="1526.2" cy="351.3" rx="5.1" ry="3.4" fill="#fff"/>
<path d="M880.6 352.0L882.0 385.8A5.9 3.7 0 0 0 893.9 385.8L890.7 352.0Z" fill="url(#cg)"/><ellipse cx="885.6" cy="352.0" rx="5.1" ry="3.4" fill="#fff"/>
<path d="M1528.5 361.5L1524.3 395.3A5.9 3.7 0 0 0 1536.2 395.3L1538.7 361.5Z" fill="url(#cg)"/><ellipse cx="1533.6" cy="361.5" rx="5.1" ry="3.4" fill="#fff"/>
<path d="M874.1 361.5L875.6 395.3A5.9 3.7 0 0 0 887.5 395.3L884.3 361.5Z" fill="url(#cg)"/><ellipse cx="879.2" cy="361.5" rx="5.1" ry="3.4" fill="#fff"/>
<path d="M1543.5 387.5L1539.2 421.3A6.0 3.7 0 0 0 1551.2 421.3L1553.8 387.5Z" fill="url(#cg)"/><ellipse cx="1548.7" cy="387.5" rx="5.1" ry="3.4" fill="#fff"/>
<path d="M859.7 387.5L861.4 421.3A6.0 3.7 0 0 0 873.4 421.3L870.0 387.5Z" fill="url(#cg)"/><ellipse cx="864.9" cy="387.5" rx="5.1" ry="3.4" fill="#fff"/>
<path d="M1554.2 414.2L1549.8 448.0A6.0 3.7 0 0 0 1561.8 448.0L1564.6 414.2Z" fill="url(#cg)"/><ellipse cx="1559.4" cy="414.2" rx="5.2" ry="3.4" fill="#fff"/>
<path d="M849.7 414.6L851.4 448.5A6.0 3.7 0 0 0 863.5 448.5L860.0 414.6Z" fill="url(#cg)"/><ellipse cx="854.8" cy="414.6" rx="5.2" ry="3.4" fill="#fff"/>
<path d="M844.0 443.5L845.9 477.4A6.1 3.8 0 0 0 858.0 477.4L854.5 443.5Z" fill="url(#cg)"/><ellipse cx="849.2" cy="443.5" rx="5.2" ry="3.4" fill="#fff"/>
<path d="M1560.9 444.4L1556.4 478.2A6.1 3.8 0 0 0 1568.6 478.2L1571.4 444.4Z" fill="url(#cg)"/><ellipse cx="1566.2" cy="444.4" rx="5.2" ry="3.4" fill="#fff"/>
<path d="M770.0 599.6L1018.1 599.6L1017.6 612.5L768.6 612.5Z" fill="#e3e3e3"/><path d="M768.6 612.5L1017.6 612.5L1022.3 738.3L781.9 738.3Z" fill="#7b7b7b"/><path d="M1351.6 599.6L1600.6 599.6L1602.1 612.5L1352.3 612.5Z" fill="#e3e3e3"/><path d="M1352.3 612.5L1602.1 612.5L1586.5 738.3L1345.4 738.3Z" fill="#7b7b7b"/><path d="M1096.800 585.500A204.700 204.700 0 0 1 1268.600 585.500Z" fill="#fff"/><path d="M1115.300 583.500Q1183 560.300 1251.300 583.500Q1183 574 1115.300 583.500Z" fill="#808080"/><path d="M1042.1 584.8L1327.3 584.8L1328.8 617.2L1041.1 617.2Z" fill="#fff"/><path d="M1041.1 617.2L1328.8 617.2L1322.3 751.4L1045.2 751.4Z" fill="#7a7a7a"/><path d="M1017.6 583.1L1044.9 583.1L1043.6 626.3L1016.0 626.3Z" fill="#fff"/><path d="M1016.0 626.3L1043.6 626.3L1047.7 761.6L1021.1 761.6Z" fill="#7d7d7d"/><rect x="1023" y="582.700" width="25" height="16.300" fill="#fff" stroke="#dcdcdc" stroke-width=".8"/><rect x="1024.2" y="591.300" width="22.600" height="6" fill="#808080"/><path d="M1324.5 583.1L1352.2 583.1L1354.5 626.3L1326.5 626.3Z" fill="#fff"/><path d="M1326.5 626.3L1354.5 626.3L1346.9 761.6L1320.0 761.6Z" fill="#7d7d7d"/><rect x="1322.8" y="582.700" width="25" height="16.300" fill="#fff" stroke="#dcdcdc" stroke-width=".8"/><rect x="1324.0" y="591.300" width="22.600" height="6" fill="#808080"/>
<rect x="645.400" y="70" width="1013.100" height="49" fill="#fafafa"/><g transform="translate(670 94.500)" fill="none" stroke="#3a4244" stroke-width="1.2" stroke-linejoin="round"><path d="M-18.700 -6.500H1.800V14.300H-18.700ZM-18.700 -6.500L-9.300 -16.300H12.200L1.800 -6.500M12.200 -16.300V0" stroke-width="1.500"/><circle cx="11.800" cy="7" r="7.200" fill="#fafafa"/><path d="M7.500 7H16M11.800 2.800V11.200"/></g><g transform="translate(714.5 94.500)" fill="none" stroke="#3a4244" stroke-width="1.2" stroke-linejoin="round"><path d="M-17.0 -15.300V12.700M-11.1 -15.300V12.700M-5.2 -15.300V12.700M0.7 -15.300V12.700M6.6 -15.300V12.700M12.5 -15.300V12.700M-17 -15.3H12.500M-17 -9.7H12.500M-17 -4.1H12.500M-17 1.5H12.500M-17 7.1H12.500M-17 12.7H12.500"/><circle cx="9.500" cy="8.800" r="7" fill="#fafafa"/><path d="M5.300 8.800H13.700M9.500 4.600V13"/></g><g transform="translate(759 94.500)" fill="none" stroke="#3a4244" stroke-width="1.2" stroke-linejoin="round"><path d="M-.7 -15.300L16.900 -10.400L11.400 7.200L-5.800 2Z" stroke-width="1.400"/><path d="M-6.600 -2L-12 2.500M-16.600 2.900L-13.700 9.800L-8.200 4.900Z"/><rect x="-13.100" y="12.800" width="28.400" height="3" rx="1.500"/></g><text x="741.500" y="88.800" font-family="Liberation Sans, sans-serif" font-size="5.500" font-weight="bold" textLength="12.500" lengthAdjust="spacingAndGlyphs" fill="#3a4244">AUTO</text><g transform="translate(802.8 94.500)" fill="none" stroke="#3a4244" stroke-width="1.2" stroke-linejoin="round"><rect x="-16.300" y="-15.300" width="31.300" height="31.400" stroke-width="1.500"/><rect x="-12.500" y="-11.800" width="24" height="8"/><rect x="-12.500" y="-.3" width="6.500" height="13"/><rect x="-2.800" y="-.3" width="14.300" height="5.300"/><rect x="-2.800" y="7.700" width="14.300" height="5"/></g><g transform="translate(855.1 94.500)" fill="none" stroke="#cdcdcd" stroke-width="1" stroke-linejoin="round"><path d="M-15 10V-16H2.500L7 -12"/><path d="M-9 -11H9L14 -6.500V16.500H-9Z" fill="#fafafa"/></g><text x="857.6" y="107" text-anchor="middle" font-family="Liberation Sans, sans-serif" font-size="21" fill="#d6d6d6">O</text><g transform="translate(899.6 94.500)" fill="none" stroke="#cdcdcd" stroke-width="1" stroke-linejoin="round"><path d="M-15 10V-16H2.500L7 -12"/><path d="M-9 -11H9L14 -6.500V16.500H-9Z" fill="#fafafa"/></g><text x="902.1" y="107" text-anchor="middle" font-family="Liberation Sans, sans-serif" font-size="21" fill="#d6d6d6">P</text><g transform="translate(943.5 94.500)" fill="none" stroke="#cdcdcd" stroke-width="1" stroke-linejoin="round"><path d="M-14 -11.500H14"/><rect x="-14" y="-8" width="28" height="3.500" rx="1"/><rect x="-14" y="-2.500" width="28" height="3.500" rx="1"/><rect x="-14" y="3.500" width="28" height="3.500" rx="1"/><rect x="-14" y="9.500" width="28" height="4" rx="1"/></g><path d="M981.700 79V110M1595.700 79V110" stroke="#8a8a8a" stroke-width="1.400"/><g transform="translate(1018.7 94.500)" fill="none" stroke="#cdcdcd" stroke-width="1" stroke-linejoin="round"><path d="M0 -16.500L5.500 -11H2.500V-7H-2.500V-11H-5.500ZM0 16.500L5.500 11H2.500V7H-2.500V11H-5.500ZM-16.500 0L-11 -5.500V-2.500H-7V2.500H-11V5.500ZM16.500 0L11 -5.500V-2.500H7V2.500H11V5.500Z"/><rect x="-2" y="-2" width="4" height="4"/></g><g transform="translate(1063.2 94.500)" fill="none" stroke="#cdcdcd" stroke-width="1" stroke-linejoin="round"><path d="M-.5 -7L11.500 5L-.5 17L-12.500 5Z"/><path d="M-14.500 5A15.500 15.500 0 0 1 8.500 -12"/><path d="M6 -5.500L16.500 -3L14.500 -13.500Z"/></g><g transform="translate(1108.3 94.500)" fill="none" stroke="#cdcdcd" stroke-width="1" stroke-linejoin="round"><rect x="-16" y="-15.500" width="31.500" height="31.500" stroke-dasharray="3 2.500"/><rect x="-16" y="-1.500" width="17" height="17.500" fill="#fafafa"/><path d="M3 -3L10 -10M5.500 -11H11V-5.500"/></g><g transform="translate(1152.8 94.500)" fill="none" stroke="#cdcdcd" stroke-width="1" stroke-linejoin="round"><path d="M-2.500 -15L17 -10.500L13 6.500L-5 2Z"/><path d="M-7.500 -1.500L-15.500 3.500M-15.500 3.500L-13.500 11L-8.500 4.500Z"/><rect x="-13" y="12" width="28" height="3" rx="1.500"/></g><g transform="translate(1197.3 94.500)" fill="none" stroke="#cdcdcd" stroke-width="1" stroke-linejoin="round"><rect x="-14.500" y="-15.500" width="28.500" height="13.500"/><rect x="-14.500" y="2" width="28.500" height="14"/><path d="M-14.500 0H14" stroke-dasharray="1.500 1.500"/></g><g transform="translate(1242.4 94.500)" fill="none" stroke="#cdcdcd" stroke-width="1" stroke-linejoin="round"><rect x="-5.500" y="-15.500" width="23.500" height="23"/><rect x="-16" y="-7" width="23.500" height="23"/><rect x="-5.500" y="-7" width="13" height="14.500" fill="#dedede"/></g><g transform="translate(1286.9 94.500)" fill="none" stroke="#cdcdcd" stroke-width="1" stroke-linejoin="round"><path d="M-14.500 -15.500H16.500V16H2.500V-2.500H-14.500Z"/><rect x="-13" y="-2.500" width="11.500" height="18.500" fill="#dedede"/></g><g transform="translate(1332.7 94.500)" fill="none" stroke="#cdcdcd" stroke-width="1" stroke-linejoin="round"><path d="M-15.500 -5.500H6.500V16H-15.500ZM-15.500 -5.500L-5.500 -15.500H16.500L6.500 -5.500M16.500 -15.500V6L6.500 16"/><path d="M-9 -5V2L-5.500 8V16" stroke-dasharray="1.500 1.500"/></g><g transform="translate(1377.2 94.500)" fill="none" stroke="#cdcdcd" stroke-width="1" stroke-linejoin="round"><path d="M-16 -15.500H8V-10.500H-1V15.500H-7V-10.500H-16Z"/></g><text x="1382" y="110.500" font-family="Liberation Sans, sans-serif" font-size="17" fill="#fafafa" stroke="#cdcdcd" stroke-width=".9">a</text><g transform="translate(1422.3 94.500)" fill="none" stroke="#cdcdcd" stroke-width="1" stroke-linejoin="round"><path d="M-3 -9L11.500 2.500L-1.500 14.500L-16 3Z"/><path d="M-16 3H11"/><path d="M-12 -15.500L-3 -7" stroke-width="2.200"/><path d="M13 5.500C15.500 9.500 17 11.500 17 13.500A3.500 3.500 0 0 1 10 13.500C10 11.500 11 9.500 13 5.500Z"/></g><g transform="translate(1468.1 94.500)" fill="none" stroke="#cdcdcd" stroke-width="1" stroke-linejoin="round"><rect x="-14.500" y="-6.500" width="29" height="12" rx="1"/><path d="M-10.500 -6.500V-3M-6.500 -6.500V-1.500M-2.500 -6.500V-3M1.500 -6.500V-1.500M5.500 -6.500V-3M9.500 -6.500V-1.500"/></g><g transform="translate(1512.6 94.500)" fill="none" stroke="#cdcdcd" stroke-width="1" stroke-linejoin="round"><rect x="-14.500" y="5.500" width="29" height="9.500"/><path d="M-3.500 -14.500L13 -9.500L11 -2L-5.500 -7Z"/><path d="M-8 -2.500H8.500V5.500M-8 -2.500V5.500" stroke-dasharray="1.500 1.500"/><path d="M-9.500 -5L-16 -3L-13 3L-9 -2Z"/></g><g transform="translate(1557.1 94.500)" fill="none" stroke="#cdcdcd" stroke-width="1" stroke-linejoin="round"><rect x="-11" y="-11" width="22" height="22" stroke-width="1.600"/><circle cx="-11" cy="-11" r="4.500"/><circle cx="11" cy="-11" r="4.500"/><circle cx="-11" cy="11" r="4.500"/><circle cx="11" cy="11" r="4.500"/></g><g transform="translate(1632.3 94.500)" fill="none" stroke="#3a4244" stroke-width="1.5" stroke-linejoin="round"><path d="M-15.500 -6.500H-3V-1.500A2.500 2.500 0 1 0 -3 3.500V5H2A2.500 2.500 0 1 1 7 5H10.500V17H-15.500Z"/><path d="M-3 5V9A2.500 2.500 0 1 1 -3 14V17M-15.500 5H-12A2.500 2.500 0 1 0 -7 5H-3"/><path d="M6.700 -17L16 -8L12.500 -4.500A2.500 2.500 0 1 0 9 -1L6.700 1.200L3 -2.500A2.500 2.500 0 1 1 -.5 -6L-2.500 -8Z"/></g>
<g fill="none" stroke="#00ae42" stroke-width="1.700" stroke-linecap="round" stroke-linejoin="round"><path d="M743.800 198.300H772"/><path d="M748.500 193.500L767 182.500Q769.500 181.300 770.800 183.300Q771.800 185.300 769.500 186.800L751.500 194.500Z"/></g><g transform="translate(1597.5 232.2) skewX(7.5)"><rect x="0" y="0" width="48.5" height="32.5" rx="4.500" fill="#ececec" stroke="#7c7c7c" stroke-width="1.800"/><path d="M10 7.500L38 25.500M38 7.500L10 25.500" stroke="#5e5e5e" stroke-width="2.600" stroke-linecap="round"/></g><g transform="translate(1603 279.1) skewX(7.5)"><rect x="0" y="0" width="50.0" height="33.2" rx="4.500" fill="#ececec" stroke="#7c7c7c" stroke-width="1.800"/><path d="M25 6L44 10L40 23L22 19Z" fill="none" stroke="#5e5e5e" stroke-width="1.600"/><path d="M11 27.500H43" stroke="#5e5e5e" stroke-width="2.600" stroke-linecap="round"/><path d="M7 22L19 14.500L17 19.500L12 23Z" fill="#5e5e5e"/><text x="4" y="11.500" font-family="Liberation Sans, sans-serif" font-size="5.500" font-weight="bold" fill="#5e5e5e">AUTO</text></g><g transform="translate(1609.3 327.1) skewX(7.5)"><rect x="0" y="0" width="50.7" height="34.0" rx="4.500" fill="#ececec" stroke="#7c7c7c" stroke-width="1.800"/><g fill="none" stroke="#5e5e5e" stroke-width="1.700"><rect x="8" y="6" width="34" height="8.500"/><rect x="8" y="18.500" width="9" height="11"/><rect x="21.500" y="18.500" width="20.500" height="4"/><rect x="21.500" y="25.500" width="20.500" height="4"/></g></g><g transform="translate(1615.9 376) skewX(7.5)"><rect x="0" y="0" width="51.6" height="34.7" rx="4.500" fill="#ececec" stroke="#7c7c7c" stroke-width="1.800"/><rect x="12.500" y="17" width="26" height="12.500" rx="1.500" fill="#5e5e5e"/><path d="M16.500 17V12.500Q16.500 7 24.500 7Q32.500 7 33.500 12" fill="none" stroke="#5e5e5e" stroke-width="2.800"/></g><g transform="translate(1622.5 425.6) skewX(7.5)"><rect x="0" y="0" width="54.0" height="38.2" rx="4.500" fill="#ececec" stroke="#7c7c7c" stroke-width="1.800"/><path d="M9 19L17.500 8H36L44.500 19L36 30H17.500Z" fill="#d9d9d9" stroke="#6c6c6c" stroke-width="2.400" stroke-linejoin="round"/><ellipse cx="26.700" cy="19" rx="6.500" ry="4.800" fill="#efefef" stroke="#6c6c6c" stroke-width="2.300"/></g><defs><linearGradient id="axr" x1="0" x2="0" y1="0" y2="1"><stop offset="0" stop-color="#e01010"/><stop offset="1" stop-color="#8a0000"/></linearGradient></defs><path d="M635.300 891.600L738 891.300" stroke="url(#axr)" stroke-width="3.600"/><path d="M635.300 891.600L738 891.300" stroke="#cc0000" stroke-width="3.600" opacity=".6"/><path d="M737 886.200L758 891.200L737 896.200Z" fill="#c40000"/><path d="M635.500 891.500L644.300 816" stroke="#00c800" stroke-width="3.600"/><path d="M640 818.500L646.200 799.800L650 819.500Z" fill="#00a000"/><path d="M635.300 891.500L625.800 826" stroke="#00008c" stroke-width="3.600"/><path d="M620.500 828.500L623.500 810.500L631.500 826Z" fill="#0000b0"/><rect x="433.900" y="916.700" width="64" height="32.800" fill="#c8c8c8"/><rect x="433.900" y="949.500" width="64.700" height="56.700" fill="#c5c5c5"/><path d="M433.900 949.500H498" stroke="#cdcdcd" stroke-width=".8"/><text x="465.700" y="942.300" text-anchor="middle" font-family="DejaVu Sans, Liberation Sans, sans-serif" font-size="9.500" textLength="31" lengthAdjust="spacingAndGlyphs" fill="#3a3a3a">Oben</text><text x="465.700" y="987.600" text-anchor="middle" font-family="DejaVu Sans, Liberation Sans, sans-serif" font-size="9.500" textLength="35" lengthAdjust="spacingAndGlyphs" fill="#3a3a3a">Vorne</text><path d="M433.900 1007V968" stroke="#8080c0" stroke-width="2.600"/><path d="M427.700 969.500L433.900 957L440.200 969.500Z" fill="#8080c0"/><path d="M433.500 1007.300H492" stroke="#c47c7c" stroke-width="2.600"/><path d="M491.500 1001.300L503.800 1007.300L491.500 1013.300Z" fill="#c47c7c"/><text x="512.800" y="1011" font-family="DejaVu Sans, sans-serif" font-size="11" fill="#c87474">x</text><text x="429.800" y="951" font-family="DejaVu Sans, sans-serif" font-size="10.500" fill="#7a8ad0">z</text><text x="430" y="952.800" font-family="DejaVu Sans, sans-serif" font-size="10.500" fill="#66bb66" opacity=".75">y</text><circle cx="556.700" cy="994.300" r="18.200" fill="#fbfbfb"/><g fill="none" stroke="#55595b" stroke-width="1.700" stroke-linejoin="round" stroke-linecap="round" transform="translate(.4 .4)"><path d="M549.500 984.500H547.500Q546 984.500 546 986V988.500M563 984.500H565Q566.500 984.500 566.500 986V988.500M549.500 1003.700H547.500Q546 1003.700 546 1002.200V999.700M563 1003.700H565Q566.500 1003.700 566.500 1002.200V999.700"/><path d="M556.300 987.300L562 990.500V997.500L556.300 1000.800L550.600 997.500V990.500ZM550.600 990.500L556.300 993.800L562 990.500M556.300 993.800V1000.800"/></g><path d="M1523 971.600H1740V1015.100H1523Q1517.300 1015.100 1517.300 1009.500V977.500Q1517.300 971.600 1523 971.600Z" fill="#fff" stroke="#00ae42" stroke-width="1"/><path d="M1525.500 971.600V1015.100H1523Q1517.300 1015.100 1517.300 1009.500V977.500Q1517.300 971.600 1523 971.600Z" fill="#00ae42"/><text x="1532.200" y="997.800" font-family="Liberation Sans, sans-serif" font-size="13" textLength="198.600" lengthAdjust="spacing" fill="#262e30">Neues Netzwerk-Plugin verfügbar</text>
</svg>
<div id="title">
<svg class="abs" style="left:0;top:0" width="400" height="33" viewBox="0 0 400 33">
<g stroke="#fff" stroke-width="1.6" fill="none"><path d="M0 3.8H15M0 10H15M0 16.2H15"/><path d="M77 8.5l5.5 5 5.5-5" stroke-width="1.4"/></g>
<path d="M115.5 0V29" stroke="#4a5356" stroke-width="1"/>
<g fill="none" stroke="#818181" stroke-width="1.6"><path d="M150 -2V21.2H171.2V8L164 0.8"/></g>
<rect x="154" y="-2" width="9" height="7" fill="#818181"/><rect x="153" y="14.5" width="15" height="6.5" fill="#818181"/>
<path d="M197 9.5l7.5-6v3.6c5 .3 8 3 8.700 8.900c-2-3-4.500-4.300-8.700-4.300v3.800z" fill="#fff"/>
<path d="M262.500 9.500l-7.500-6v3.600c-5 .3-8 3-8.700 8.900c2-3 4.500-4.300 8.700-4.300v3.800z" fill="#fff"/>
<g fill="none" stroke="#fff" stroke-width="1.4"><rect x="298.500" y="3.500" width="15" height="15"/><path d="M306 0V8M306 15V23.500M294 11H302M310 11H318.500"/></g>
<rect x="302" y="7" width="8" height="8" fill="#818181" opacity=".75"/>
</svg>
<span class="t" style="left:19.0px;top:5.0px;font-size:12.5px;color:#fff;letter-spacing:-0.55px;">Datei</span><span class="t" style="left:322.0px;top:6.0px;font-size:12.5px;color:#fff;letter-spacing:-0.25px;">Kalibrierung</span><span class="t" style="left:1002.0px;top:5.0px;font-size:12.5px;color:#fff;letter-spacing:-0.20px;">Amphietheater - Bühne</span>
</div><div id="tline"></div>
<div id="tabs">
<div class="abs" style="left:23px;top:0;width:132px;height:36px;background:#00ae42"></div>
<svg class="abs" style="left:0;top:0" width="700" height="36" viewBox="0 34 700 36">
<path d="M-3 52L4.800 40.800 12.600 52H10.800V61.200H5.800V54.500H2.600V61.200H-3z" fill="#fff"/>
<g fill="none" stroke="#fff" stroke-width="1.300" stroke-linejoin="round">
<path d="M43 44.500l7.500 3.500v8.500L43 60l-7.500-3.500V48zM35.500 48l7.500 3.700 7.500-3.700"/>
<path d="M184 44.500l7.500 3.800-7.500 3.800-7.500-3.800zM176.500 52.200l7.500 3.800 7.500-3.800M176.500 55.800l7.500 3.800 7.500-3.800"/>
<path d="M321 45h6v5h-6zM324 53v5.500h3M332 45h6.500v3M331.500 53.500h7v6h-7zM334 53.500v2.500h2.500v-2.500"/>
<rect x="447.500" y="44.500" width="16" height="15" rx="2"/><path d="M451 48.500h1.500M451 52h1.500M451 55.500h1.500M455 48.500h5.500M455 52h5.500M455 55.500h5.500"/>
<circle cx="571" cy="52" r="6.2"/>
<path d="M571 50v4M569 52h4" stroke-width="1.100"/>
</g></svg>
<div class="abs" style="left:1454px;top:6px;width:24px;height:24px;background:#00ae42;border-radius:12px 0 0 12px"></div>
<div class="abs" style="left:1480px;top:6px;width:163px;height:24px;background:#00ae42;border-radius:0 12px 12px 0"></div>
<div class="abs" style="left:1658px;top:6px;width:24px;height:24px;background:#00ae42;border-radius:12px 0 0 12px"></div>
<div class="abs" style="left:1684px;top:6px;width:60px;height:24px;background:#6b6b6b"></div>
<svg class="abs" style="left:1450px;top:0" width="285" height="36" viewBox="1450 34 285 36"><g fill="none" stroke="#fff" stroke-width="1.600"><path d="M1461.500 50l6 5 6-5M1665.500 50l6 5 6-5"/></g></svg>
<span class="t" style="left:62.0px;top:10.0px;font-size:15.5px;color:#fff;letter-spacing:0.37px;">Vorbereiten</span><span class="t" style="left:203.0px;top:10.0px;font-size:15.5px;color:#fff;letter-spacing:0.05px;">Vorschau</span><span class="t" style="left:348.0px;top:10.0px;font-size:15.5px;color:#fff;letter-spacing:-0.19px;">Gerät</span><span class="t" style="left:474.0px;top:10.0px;font-size:15.5px;color:#fff;letter-spacing:0.29px;">Projekt</span><span class="t" style="left:590.0px;top:10.0px;font-size:15.5px;color:#fff;letter-spacing:0.30px;">Kalibrierung</span><span class="t" style="left:1495.5px;top:10.0px;font-size:15.5px;color:#fff;letter-spacing:0.13px;">Druckplatte slicen</span><span class="t" style="left:1699.5px;top:10.0px;font-size:15.5px;color:#9b9b9b;letter-spacing:.4px;">Druckplatte drucken</span>
</div>
<div id="bot"></div>
</body></html>
